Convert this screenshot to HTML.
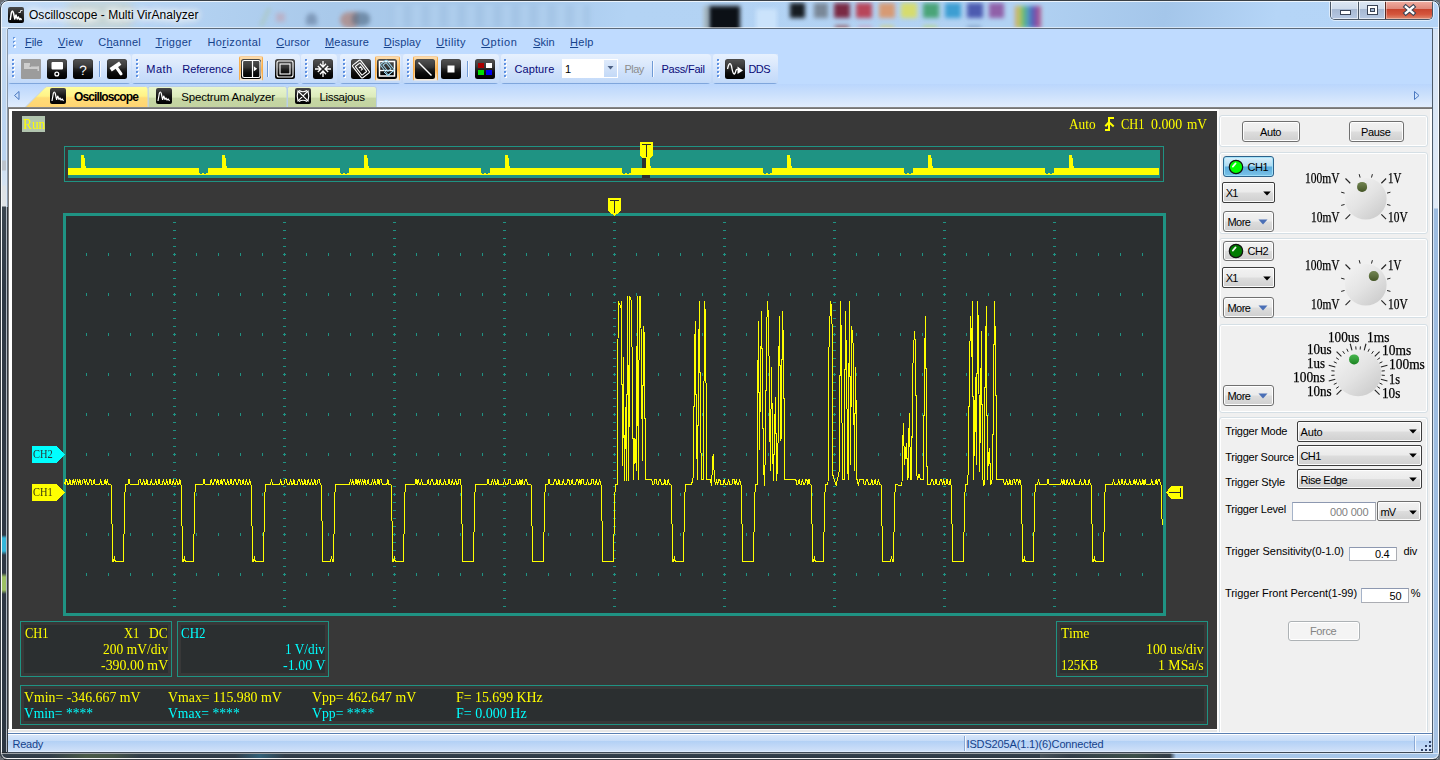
<!DOCTYPE html>
<html lang="en"><head><meta charset="utf-8"><title>Oscilloscope - Multi VirAnalyzer</title>
<style>
*{box-sizing:border-box;margin:0;padding:0}
html,body{width:1440px;height:760px;overflow:hidden;background:#6a6f75}
body{position:relative;font-family:"Liberation Sans","DejaVu Sans",sans-serif;font-size:11px;color:#000}
.abs{position:absolute}
#win{position:absolute;left:0;top:0;width:1440px;height:760px;border-radius:8px 8px 7px 7px;overflow:hidden;
 background:linear-gradient(to bottom,#b6d4f2 0,#b4d3f2 28px,#b9d3ee 29px,#b3cbe6 400px,#a9c0da 700px,#46545e 752px,#27343b 760px)}
#winborder{position:absolute;left:0;top:0;width:1440px;height:760px;border-radius:8px 8px 7px 7px;border:1px solid #3a4046;box-shadow:inset 0 0 0 1px rgba(255,255,255,.75);pointer-events:none;z-index:50}
#title{position:absolute;left:0;top:0;width:1440px;height:29px;overflow:hidden;
 background:linear-gradient(100deg,#c4dcf6 0,#b8d6f5 120px,#a9c9ea 330px,#a6c8ea 520px,#b3d3f4 620px,#b2d2f3 1000px,#a4c6ea 1150px,#b5d5f7 1260px,#b4d4f6 1440px)}
#title .blob{position:absolute;filter:blur(2.2px)}
#ttext{position:absolute;left:29px;top:6.700px;font-size:12px;line-height:16px;color:#000;white-space:nowrap;letter-spacing:0.03px;
 text-shadow:0 0 6px #fff,0 0 8px #fff,0 0 10px #fff,0 0 12px rgba(255,255,255,.9)}
#client{position:absolute;left:8px;top:29px;width:1425px;height:723px;background:#bfdbff;overflow:hidden}
.lframe{position:absolute;top:29px;height:724px;width:8px}

</style></head><body>
<div id="win">
<div id="title">
<div class="blob" style="left:68px;top:1px;width:64px;height:28px;background:#d6d2a8;opacity:.42;filter:blur(5px)"></div>
<div class="blob" style="left:255px;top:8px;width:20px;height:18px;background:linear-gradient(115deg,transparent 40%,#a9c39a 50%,transparent 62%);opacity:.55"></div>
<div class="blob" style="left:276px;top:13px;width:9px;height:9px;background:#c69aa6;opacity:.5"></div>
<div class="blob" style="left:306px;top:13px;width:11px;height:12px;background:#6d86a6;opacity:.7;border-radius:50% 50% 0 0"></div>
<div class="blob" style="left:340px;top:12px;width:18px;height:16px;background:#b07a6c;opacity:.65;border-radius:60% 20% 40% 60%"></div>
<div class="blob" style="left:352px;top:12px;width:18px;height:14px;background:#4d6680;opacity:.6;border-radius:40%"></div>
<div class="blob" style="left:390px;top:5px;width:200px;height:22px;background:repeating-linear-gradient(90deg,#a2c2e3 0,#b4d2f0 9px,#9fc0e2 18px);opacity:.7"></div>
<div class="blob" style="left:709px;top:6px;width:31px;height:26px;background:#0c1016"></div>
<div class="blob" style="left:704px;top:6px;width:4px;height:26px;background:#9a9a8a;opacity:.6"></div>
<div class="blob" style="left:756px;top:9px;width:21px;height:22px;background:#cbe3fb"></div>
<div class="blob" style="left:790px;top:3px;width:15px;height:15px;background:#161c22"></div>
<div class="blob" style="left:814px;top:3px;width:14px;height:15px;background:#7a8898"></div>
<div class="blob" style="left:834px;top:3px;width:16px;height:15px;background:#7a2a44"></div>
<div class="blob" style="left:856px;top:3px;width:16px;height:15px;background:#b8465a"></div>
<div class="blob" style="left:879px;top:3px;width:16px;height:15px;background:#d79a74"></div>
<div class="blob" style="left:901px;top:3px;width:16px;height:15px;background:#d6dc6e"></div>
<div class="blob" style="left:923px;top:3px;width:16px;height:15px;background:#4aa478"></div>
<div class="blob" style="left:945px;top:3px;width:16px;height:15px;background:#3d9ed2"></div>
<div class="blob" style="left:967px;top:3px;width:16px;height:15px;background:#4d5bb0"></div>
<div class="blob" style="left:989px;top:3px;width:15px;height:15px;background:#9060a8"></div>
<div class="blob" style="left:835px;top:25px;width:14px;height:5px;background:#8a3a3a;opacity:.6"></div>
<div class="blob" style="left:858px;top:25px;width:14px;height:5px;background:#c9a0c0;opacity:.6"></div>
<div class="blob" style="left:880px;top:25px;width:14px;height:5px;background:#d8d070;opacity:.6"></div>
<div class="blob" style="left:923px;top:25px;width:14px;height:5px;background:#b8d878;opacity:.6"></div>
<div class="blob" style="left:967px;top:25px;width:14px;height:5px;background:#7a98c0;opacity:.6"></div>
<div class="blob" style="left:1015px;top:6px;width:26px;height:22px;background:linear-gradient(90deg,#c8a070,#c8c860,#60b878,#50a0c8,#5060b8,#9050a8,#b86080)"></div>
<div class="abs" style="left:0;top:27px;width:1440px;height:1px;background:rgba(255,255,255,.55)"></div>
<svg class="abs" style="left:8px;top:7px" width="16" height="16" viewBox="0 0 16 16"><defs><linearGradient id="ig" x1="0" y1="0" x2="0" y2="1"><stop offset="0" stop-color="#4a4a4a"/><stop offset=".5" stop-color="#1c1c1c"/><stop offset="1" stop-color="#000"/></linearGradient></defs><rect x="0" y="0" width="16" height="16" rx="2" fill="url(#ig)"/><path d="M2.200 13 L3.300 6 Q4.400 2 5.500 6 L6.800 12 L8 8 L9.300 12 L10.400 10 L11.500 12.500 L12.500 11.500 L13.500 13" fill="none" stroke="#fff" stroke-width="1.500" stroke-linejoin="round"/><path d="M10.5 5.5 H12.5 V3.5 H14.5" fill="none" stroke="#ddd" stroke-width="1"/></svg>
<div id="ttext">Oscilloscope - Multi VirAnalyzer</div>
<div class="abs" style="left:1330px;top:0;width:103px;height:20px;border:1px solid #4a5766;border-top:none;border-radius:0 0 5px 5px;overflow:hidden;box-shadow:0 0 0 1px rgba(255,255,255,.55)">
<div class="abs" style="left:0;top:0;width:27px;height:19px;background:linear-gradient(to bottom,#dfe9f5 0,#cfdcec 45%,#a7b9d3 50%,#b6c8e2 100%);box-shadow:inset 0 0 0 1px rgba(255,255,255,.6)"></div>
<div class="abs" style="left:27px;top:0;width:1px;height:19px;background:#4a5766"></div>
<div class="abs" style="left:28px;top:0;width:26px;height:19px;background:linear-gradient(to bottom,#dfe9f5 0,#cfdcec 45%,#a7b9d3 50%,#b6c8e2 100%);box-shadow:inset 0 0 0 1px rgba(255,255,255,.6)"></div>
<div class="abs" style="left:54px;top:0;width:1px;height:19px;background:#5a2a22"></div>
<div class="abs" style="left:55px;top:0;width:47px;height:19px;background:linear-gradient(to bottom,#f3b4a8 0,#e08a7c 45%,#c8452f 50%,#d4553c 75%,#e08a70 100%);box-shadow:inset 0 0 0 1px rgba(255,255,255,.35)"></div>
<svg class="abs" style="left:0;top:0" width="103" height="20" viewBox="0 0 103 20">
<rect x="9.500" y="10.500" width="10" height="4" fill="#fff" stroke="#3a4456" stroke-width="1"/>
<rect x="36.500" y="5.500" width="10" height="9" fill="#fff" stroke="#3a4456" stroke-width="1"/><rect x="39.500" y="8.500" width="4" height="3" fill="#a7b9d3" stroke="#3a4456" stroke-width="1"/>
<path d="M74.800 6.800 L82.200 13.200 M82.200 6.800 L74.800 13.200" stroke="#3a4456" stroke-width="4.400" stroke-linecap="square" fill="none"/><path d="M74.800 6.800 L82.200 13.200 M82.200 6.800 L74.800 13.200" stroke="#fff" stroke-width="2.300" stroke-linecap="square" fill="none"/>
</svg></div>
</div>
<div class="abs" style="left:0;top:29px;width:8px;height:724px;background:linear-gradient(to bottom,#c3d9f2 0,#b9d3f0 131px,#bcc3cc 132px,#bcc3cc 141px,#cfe0f2 142px,#d4e2f1 156px,#dde2e6 157px,#dfe3e6 177px,#3b4650 178px,#2f3a46 260px,#2e3844 506px,#35b5d8 509px,#35b5d8 522px,#2e3844 526px,#2e3844 544px,#9cc064 548px,#9cc064 561px,#2e3844 565px,#2c3641 724px)"></div>
<div class="abs" style="left:0;top:29px;width:2px;height:724px;background:linear-gradient(to right,#20262c 0,#20262c 1px,#d3d9df 1px,#d3d9df 2px)"></div>
<div class="abs" style="left:6px;top:29px;width:2px;height:724px;background:linear-gradient(to right,#b0b8c2 0,#b0b8c2 1px,#343a40 1px,#343a40 2px)"></div>
<div class="abs" style="left:6px;top:29px;width:2px;height:178px;background:linear-gradient(to right,#dbe7f5 0,#dbe7f5 1px,#8796a8 1px,#8796a8 2px)"></div>
<div class="abs" style="left:1433px;top:29px;width:7px;height:724px;background:linear-gradient(to bottom,#d6e4f5 0,#e2ebf7 179px,#9dbce0 180px,#9fbee2 600px,#a6c2e3 724px)"></div>
<div class="abs" style="left:1433px;top:29px;width:1px;height:724px;background:#d6e5f6"></div>
<div class="abs" style="left:1438px;top:29px;width:2px;height:724px;background:linear-gradient(to right,#e8f2fd 0,#e8f2fd 1px,#10151b 1px,#10151b 2px)"></div>
<div class="abs" style="left:0;top:752px;width:1440px;height:8px;background:linear-gradient(to bottom,#22272c 0,#22272c 1px,#9a9fa3 1px,#9a9fa3 2px,#34404b 2px,#2e3944 6px,#d0d3d6 6px,#d0d3d6 7px,#000 7px,#000 8px)"></div>
<div class="abs" style="left:50px;top:754px;width:90px;height:4px;background:linear-gradient(to right,rgba(80,100,70,0) 0,rgba(88,108,72,.6) 40%,rgba(88,108,72,.5) 70%,rgba(80,100,70,0) 100%)"></div>
<div class="abs" style="left:235px;top:754px;width:50px;height:4px;background:linear-gradient(to right,rgba(50,110,140,0) 0,rgba(50,120,150,.6) 50%,rgba(50,110,140,0) 100%)"></div>
<div class="abs" style="left:1040px;top:754px;width:134px;height:4px;background:linear-gradient(to right,rgba(90,100,105,.5) 0,rgba(40,50,60,0) 30px,rgba(70,95,75,.55) 95px,rgba(50,60,66,.3) 125px,rgba(50,60,66,0) 134px)"></div>
<div class="abs" style="left:1170px;top:752px;width:270px;height:7px;background:linear-gradient(to right,rgba(169,200,234,0) 0,#a9c8ea 6px,#a6c5e8 270px)"></div>
<div class="abs" style="left:1170px;top:753px;width:270px;height:1px;background:linear-gradient(to right,rgba(214,229,246,0) 0,#d6e5f6 6px)"></div>
<div class="abs" style="left:1170px;top:758px;width:270px;height:1px;background:linear-gradient(to right,rgba(230,240,252,0) 0,#e6f0fc 6px)"></div>
<div class="abs" style="left:8px;top:28px;width:1425px;height:1px;background:#5b6a7b"></div>
<div class="abs" id="bars" style="left:0;top:0;width:1440px;height:112px">
<div class="abs" style="left:8px;top:29px;width:1425px;height:25px;background:#bfdbff"></div>
<div class="abs" style="left:8px;top:54px;width:1425px;height:30px;background:#bfdbff"></div><div class="abs" style="left:8px;top:54px;width:770px;height:30px;background:linear-gradient(to bottom,#d3e4fc 0,#c9defa 60%,#bdd5f6 95%,#bfdbff 100%)"></div>
<div class="abs" style="left:8px;top:84px;width:1425px;height:24px;background:linear-gradient(to bottom,#bad6fd 0,#c9dffc 40%,#e3eefd 100%)"></div>
<svg class="abs" style="left:8px;top:29px" width="12" height="25" viewBox="0 0 12 25" shape-rendering="crispEdges">
<rect x="5" y="8" width="2" height="2" fill="#6a9ae0"/><rect x="6" y="9" width="2" height="2" fill="#fff" opacity=".9"/><rect x="5" y="8" width="2" height="2" fill="#6a9ae0" opacity=".0"/>
<rect x="5" y="12" width="2" height="2" fill="#6a9ae0"/><rect x="6" y="13" width="2" height="2" fill="#fff" opacity=".9"/><rect x="5" y="12" width="2" height="2" fill="#6a9ae0" opacity=".0"/>
<rect x="5" y="16" width="2" height="2" fill="#6a9ae0"/><rect x="6" y="17" width="2" height="2" fill="#fff" opacity=".9"/><rect x="5" y="16" width="2" height="2" fill="#6a9ae0" opacity=".0"/>
</svg>
<span class="abs" style="left:25.00px;top:35.00px;font-family:'Liberation Sans','DejaVu Sans',sans-serif;font-size:11px;line-height:14px;color:#15428b;letter-spacing:-0.062px;white-space:pre;"><u>F</u>ile</span>
<span class="abs" style="left:58.00px;top:35.00px;font-family:'Liberation Sans','DejaVu Sans',sans-serif;font-size:11px;line-height:14px;color:#15428b;letter-spacing:0.336px;white-space:pre;"><u>V</u>iew</span>
<span class="abs" style="left:98.25px;top:35.00px;font-family:'Liberation Sans','DejaVu Sans',sans-serif;font-size:11px;line-height:14px;color:#15428b;letter-spacing:0.250px;white-space:pre;">C<u>h</u>annel</span>
<span class="abs" style="left:155.50px;top:35.00px;font-family:'Liberation Sans','DejaVu Sans',sans-serif;font-size:11px;line-height:14px;color:#15428b;letter-spacing:0.295px;white-space:pre;"><u>T</u>rigger</span>
<span class="abs" style="left:207.50px;top:35.00px;font-family:'Liberation Sans','DejaVu Sans',sans-serif;font-size:11px;line-height:14px;color:#15428b;letter-spacing:0.397px;white-space:pre;">Ho<u>r</u>izontal</span>
<span class="abs" style="left:276.25px;top:35.00px;font-family:'Liberation Sans','DejaVu Sans',sans-serif;font-size:11px;line-height:14px;color:#15428b;letter-spacing:0.122px;white-space:pre;"><u>C</u>ursor</span>
<span class="abs" style="left:325.00px;top:35.00px;font-family:'Liberation Sans','DejaVu Sans',sans-serif;font-size:11px;line-height:14px;color:#15428b;letter-spacing:0.170px;white-space:pre;"><u>M</u>easure</span>
<span class="abs" style="left:383.75px;top:35.00px;font-family:'Liberation Sans','DejaVu Sans',sans-serif;font-size:11px;line-height:14px;color:#15428b;letter-spacing:0.167px;white-space:pre;"><u>D</u>isplay</span>
<span class="abs" style="left:436.25px;top:35.00px;font-family:'Liberation Sans','DejaVu Sans',sans-serif;font-size:11px;line-height:14px;color:#15428b;letter-spacing:0.406px;white-space:pre;"><u>U</u>tility</span>
<span class="abs" style="left:481.25px;top:35.00px;font-family:'Liberation Sans','DejaVu Sans',sans-serif;font-size:11px;line-height:14px;color:#15428b;letter-spacing:0.638px;white-space:pre;"><u>O</u>ption</span>
<span class="abs" style="left:533.25px;top:35.00px;font-family:'Liberation Sans','DejaVu Sans',sans-serif;font-size:11px;line-height:14px;color:#15428b;letter-spacing:-0.039px;white-space:pre;"><u>S</u>kin</span>
<span class="abs" style="left:570.00px;top:35.00px;font-family:'Liberation Sans','DejaVu Sans',sans-serif;font-size:11px;line-height:14px;color:#15428b;letter-spacing:0.277px;white-space:pre;"><u>H</u>elp</span>
<div class="abs" style="left:8px;top:54px;width:123px;height:30px;border-radius:3px 4px 4px 3px;background:linear-gradient(to bottom,#e7f1fe 0,#dce9fc 10px,#cfe1fb 18px,#c3daf9 28px,#c0d8f8 29px,#7fa6dc 29px,#7fa6dc 30px)"></div>
<div class="abs" style="left:132px;top:54px;width:167.5px;height:30px;border-radius:3px 4px 4px 3px;background:linear-gradient(to bottom,#e7f1fe 0,#dce9fc 10px,#cfe1fb 18px,#c3daf9 28px,#c0d8f8 29px,#7fa6dc 29px,#7fa6dc 30px)"></div>
<div class="abs" style="left:301px;top:54px;width:36px;height:30px;border-radius:3px 4px 4px 3px;background:linear-gradient(to bottom,#e7f1fe 0,#dce9fc 10px,#cfe1fb 18px,#c3daf9 28px,#c0d8f8 29px,#7fa6dc 29px,#7fa6dc 30px)"></div>
<div class="abs" style="left:339.5px;top:54px;width:61px;height:30px;border-radius:3px 4px 4px 3px;background:linear-gradient(to bottom,#e7f1fe 0,#dce9fc 10px,#cfe1fb 18px,#c3daf9 28px,#c0d8f8 29px,#7fa6dc 29px,#7fa6dc 30px)"></div>
<div class="abs" style="left:403px;top:54px;width:95.5px;height:30px;border-radius:3px 4px 4px 3px;background:linear-gradient(to bottom,#e7f1fe 0,#dce9fc 10px,#cfe1fb 18px,#c3daf9 28px,#c0d8f8 29px,#7fa6dc 29px,#7fa6dc 30px)"></div>
<div class="abs" style="left:501px;top:54px;width:210px;height:30px;border-radius:3px 4px 4px 3px;background:linear-gradient(to bottom,#e7f1fe 0,#dce9fc 10px,#cfe1fb 18px,#c3daf9 28px,#c0d8f8 29px,#7fa6dc 29px,#7fa6dc 30px)"></div>
<div class="abs" style="left:712.5px;top:54px;width:65px;height:30px;border-radius:3px 4px 4px 3px;background:linear-gradient(to bottom,#e7f1fe 0,#dce9fc 10px,#cfe1fb 18px,#c3daf9 28px,#c0d8f8 29px,#7fa6dc 29px,#7fa6dc 30px)"></div>
<svg class="abs" style="left:12px;top:58px" width="4" height="22" viewBox="0 0 4 22" shape-rendering="crispEdges">
<rect x="0" y="1" width="2" height="2" fill="#5a8ee0"/><rect x="1" y="2" width="2" height="2" fill="#fff"/><rect x="0" y="1" width="2" height="2" fill="#5a8ee0" opacity=".85"/>
<rect x="0" y="5" width="2" height="2" fill="#5a8ee0"/><rect x="1" y="6" width="2" height="2" fill="#fff"/><rect x="0" y="5" width="2" height="2" fill="#5a8ee0" opacity=".85"/>
<rect x="0" y="9" width="2" height="2" fill="#5a8ee0"/><rect x="1" y="10" width="2" height="2" fill="#fff"/><rect x="0" y="9" width="2" height="2" fill="#5a8ee0" opacity=".85"/>
<rect x="0" y="13" width="2" height="2" fill="#5a8ee0"/><rect x="1" y="14" width="2" height="2" fill="#fff"/><rect x="0" y="13" width="2" height="2" fill="#5a8ee0" opacity=".85"/>
<rect x="0" y="17" width="2" height="2" fill="#5a8ee0"/><rect x="1" y="18" width="2" height="2" fill="#fff"/><rect x="0" y="17" width="2" height="2" fill="#5a8ee0" opacity=".85"/>
</svg>
<svg class="abs" style="left:135.5px;top:58px" width="4" height="22" viewBox="0 0 4 22" shape-rendering="crispEdges">
<rect x="0" y="1" width="2" height="2" fill="#5a8ee0"/><rect x="1" y="2" width="2" height="2" fill="#fff"/><rect x="0" y="1" width="2" height="2" fill="#5a8ee0" opacity=".85"/>
<rect x="0" y="5" width="2" height="2" fill="#5a8ee0"/><rect x="1" y="6" width="2" height="2" fill="#fff"/><rect x="0" y="5" width="2" height="2" fill="#5a8ee0" opacity=".85"/>
<rect x="0" y="9" width="2" height="2" fill="#5a8ee0"/><rect x="1" y="10" width="2" height="2" fill="#fff"/><rect x="0" y="9" width="2" height="2" fill="#5a8ee0" opacity=".85"/>
<rect x="0" y="13" width="2" height="2" fill="#5a8ee0"/><rect x="1" y="14" width="2" height="2" fill="#fff"/><rect x="0" y="13" width="2" height="2" fill="#5a8ee0" opacity=".85"/>
<rect x="0" y="17" width="2" height="2" fill="#5a8ee0"/><rect x="1" y="18" width="2" height="2" fill="#fff"/><rect x="0" y="17" width="2" height="2" fill="#5a8ee0" opacity=".85"/>
</svg>
<svg class="abs" style="left:304.5px;top:58px" width="4" height="22" viewBox="0 0 4 22" shape-rendering="crispEdges">
<rect x="0" y="1" width="2" height="2" fill="#5a8ee0"/><rect x="1" y="2" width="2" height="2" fill="#fff"/><rect x="0" y="1" width="2" height="2" fill="#5a8ee0" opacity=".85"/>
<rect x="0" y="5" width="2" height="2" fill="#5a8ee0"/><rect x="1" y="6" width="2" height="2" fill="#fff"/><rect x="0" y="5" width="2" height="2" fill="#5a8ee0" opacity=".85"/>
<rect x="0" y="9" width="2" height="2" fill="#5a8ee0"/><rect x="1" y="10" width="2" height="2" fill="#fff"/><rect x="0" y="9" width="2" height="2" fill="#5a8ee0" opacity=".85"/>
<rect x="0" y="13" width="2" height="2" fill="#5a8ee0"/><rect x="1" y="14" width="2" height="2" fill="#fff"/><rect x="0" y="13" width="2" height="2" fill="#5a8ee0" opacity=".85"/>
<rect x="0" y="17" width="2" height="2" fill="#5a8ee0"/><rect x="1" y="18" width="2" height="2" fill="#fff"/><rect x="0" y="17" width="2" height="2" fill="#5a8ee0" opacity=".85"/>
</svg>
<svg class="abs" style="left:342.5px;top:58px" width="4" height="22" viewBox="0 0 4 22" shape-rendering="crispEdges">
<rect x="0" y="1" width="2" height="2" fill="#5a8ee0"/><rect x="1" y="2" width="2" height="2" fill="#fff"/><rect x="0" y="1" width="2" height="2" fill="#5a8ee0" opacity=".85"/>
<rect x="0" y="5" width="2" height="2" fill="#5a8ee0"/><rect x="1" y="6" width="2" height="2" fill="#fff"/><rect x="0" y="5" width="2" height="2" fill="#5a8ee0" opacity=".85"/>
<rect x="0" y="9" width="2" height="2" fill="#5a8ee0"/><rect x="1" y="10" width="2" height="2" fill="#fff"/><rect x="0" y="9" width="2" height="2" fill="#5a8ee0" opacity=".85"/>
<rect x="0" y="13" width="2" height="2" fill="#5a8ee0"/><rect x="1" y="14" width="2" height="2" fill="#fff"/><rect x="0" y="13" width="2" height="2" fill="#5a8ee0" opacity=".85"/>
<rect x="0" y="17" width="2" height="2" fill="#5a8ee0"/><rect x="1" y="18" width="2" height="2" fill="#fff"/><rect x="0" y="17" width="2" height="2" fill="#5a8ee0" opacity=".85"/>
</svg>
<svg class="abs" style="left:406.5px;top:58px" width="4" height="22" viewBox="0 0 4 22" shape-rendering="crispEdges">
<rect x="0" y="1" width="2" height="2" fill="#5a8ee0"/><rect x="1" y="2" width="2" height="2" fill="#fff"/><rect x="0" y="1" width="2" height="2" fill="#5a8ee0" opacity=".85"/>
<rect x="0" y="5" width="2" height="2" fill="#5a8ee0"/><rect x="1" y="6" width="2" height="2" fill="#fff"/><rect x="0" y="5" width="2" height="2" fill="#5a8ee0" opacity=".85"/>
<rect x="0" y="9" width="2" height="2" fill="#5a8ee0"/><rect x="1" y="10" width="2" height="2" fill="#fff"/><rect x="0" y="9" width="2" height="2" fill="#5a8ee0" opacity=".85"/>
<rect x="0" y="13" width="2" height="2" fill="#5a8ee0"/><rect x="1" y="14" width="2" height="2" fill="#fff"/><rect x="0" y="13" width="2" height="2" fill="#5a8ee0" opacity=".85"/>
<rect x="0" y="17" width="2" height="2" fill="#5a8ee0"/><rect x="1" y="18" width="2" height="2" fill="#fff"/><rect x="0" y="17" width="2" height="2" fill="#5a8ee0" opacity=".85"/>
</svg>
<svg class="abs" style="left:504px;top:58px" width="4" height="22" viewBox="0 0 4 22" shape-rendering="crispEdges">
<rect x="0" y="1" width="2" height="2" fill="#5a8ee0"/><rect x="1" y="2" width="2" height="2" fill="#fff"/><rect x="0" y="1" width="2" height="2" fill="#5a8ee0" opacity=".85"/>
<rect x="0" y="5" width="2" height="2" fill="#5a8ee0"/><rect x="1" y="6" width="2" height="2" fill="#fff"/><rect x="0" y="5" width="2" height="2" fill="#5a8ee0" opacity=".85"/>
<rect x="0" y="9" width="2" height="2" fill="#5a8ee0"/><rect x="1" y="10" width="2" height="2" fill="#fff"/><rect x="0" y="9" width="2" height="2" fill="#5a8ee0" opacity=".85"/>
<rect x="0" y="13" width="2" height="2" fill="#5a8ee0"/><rect x="1" y="14" width="2" height="2" fill="#fff"/><rect x="0" y="13" width="2" height="2" fill="#5a8ee0" opacity=".85"/>
<rect x="0" y="17" width="2" height="2" fill="#5a8ee0"/><rect x="1" y="18" width="2" height="2" fill="#fff"/><rect x="0" y="17" width="2" height="2" fill="#5a8ee0" opacity=".85"/>
</svg>
<svg class="abs" style="left:716.5px;top:58px" width="4" height="22" viewBox="0 0 4 22" shape-rendering="crispEdges">
<rect x="0" y="1" width="2" height="2" fill="#5a8ee0"/><rect x="1" y="2" width="2" height="2" fill="#fff"/><rect x="0" y="1" width="2" height="2" fill="#5a8ee0" opacity=".85"/>
<rect x="0" y="5" width="2" height="2" fill="#5a8ee0"/><rect x="1" y="6" width="2" height="2" fill="#fff"/><rect x="0" y="5" width="2" height="2" fill="#5a8ee0" opacity=".85"/>
<rect x="0" y="9" width="2" height="2" fill="#5a8ee0"/><rect x="1" y="10" width="2" height="2" fill="#fff"/><rect x="0" y="9" width="2" height="2" fill="#5a8ee0" opacity=".85"/>
<rect x="0" y="13" width="2" height="2" fill="#5a8ee0"/><rect x="1" y="14" width="2" height="2" fill="#fff"/><rect x="0" y="13" width="2" height="2" fill="#5a8ee0" opacity=".85"/>
<rect x="0" y="17" width="2" height="2" fill="#5a8ee0"/><rect x="1" y="18" width="2" height="2" fill="#fff"/><rect x="0" y="17" width="2" height="2" fill="#5a8ee0" opacity=".85"/>
</svg>
<div class="abs" style="left:99px;top:61px;width:1px;height:16px;background:#6f9ad6"></div><div class="abs" style="left:100px;top:61px;width:1px;height:16px;background:#f4f8fe"></div>
<div class="abs" style="left:267px;top:61px;width:1px;height:16px;background:#6f9ad6"></div><div class="abs" style="left:268px;top:61px;width:1px;height:16px;background:#f4f8fe"></div>
<div class="abs" style="left:467px;top:61px;width:1px;height:16px;background:#6f9ad6"></div><div class="abs" style="left:468px;top:61px;width:1px;height:16px;background:#f4f8fe"></div>
<div class="abs" style="left:652px;top:61px;width:1px;height:16px;background:#6f9ad6"></div><div class="abs" style="left:653px;top:61px;width:1px;height:16px;background:#f4f8fe"></div>
<div class="abs" style="left:239px;top:56px;width:24px;height:25px;border:1px solid;border-color:#f6cf9f #f7ae4c #dfe3ea #f7ae4c;border-radius:2px;background:linear-gradient(to bottom,#fbdcae 0,#fdc06a 38%,#fdb555 55%,#fdd193 76%,#efe8e0 100%)"></div>
<div class="abs" style="left:375px;top:56px;width:24.5px;height:25px;border:1px solid;border-color:#f6cf9f #f7ae4c #dfe3ea #f7ae4c;border-radius:2px;background:linear-gradient(to bottom,#fbdcae 0,#fdc06a 38%,#fdb555 55%,#fdd193 76%,#efe8e0 100%)"></div>
<div class="abs" style="left:413px;top:56px;width:24.5px;height:25px;border:1px solid;border-color:#f6cf9f #f7ae4c #dfe3ea #f7ae4c;border-radius:2px;background:linear-gradient(to bottom,#fbdcae 0,#fdc06a 38%,#fdb555 55%,#fdd193 76%,#efe8e0 100%)"></div>
<span class="abs" style="left:146.25px;top:62.00px;font-family:'Liberation Sans','DejaVu Sans',sans-serif;font-size:11px;line-height:14px;color:#0a0a78;letter-spacing:0.508px;white-space:pre;">Math</span>
<span class="abs" style="left:182.25px;top:62.00px;font-family:'Liberation Sans','DejaVu Sans',sans-serif;font-size:11px;line-height:14px;color:#0a0a78;letter-spacing:-0.030px;white-space:pre;">Reference</span>
<span class="abs" style="left:514.40px;top:62.00px;font-family:'Liberation Sans','DejaVu Sans',sans-serif;font-size:11px;line-height:14px;color:#0a0a78;letter-spacing:0.123px;white-space:pre;">Capture</span>
<span class="abs" style="left:624.40px;top:62.00px;font-family:'Liberation Sans','DejaVu Sans',sans-serif;font-size:11px;line-height:14px;color:#8d8d8d;letter-spacing:-0.477px;white-space:pre;">Play</span>
<span class="abs" style="left:661.50px;top:62.00px;font-family:'Liberation Sans','DejaVu Sans',sans-serif;font-size:11px;line-height:14px;color:#0a0a78;letter-spacing:-0.217px;white-space:pre;">Pass/Fail</span>
<span class="abs" style="left:748.50px;top:62.00px;font-family:'Liberation Sans','DejaVu Sans',sans-serif;font-size:11px;line-height:14px;color:#0a0a78;letter-spacing:-0.578px;white-space:pre;">DDS</span>
<div class="abs" style="left:562px;top:59px;width:56px;height:19px;background:#fff;border:1px solid #fff"></div>
<div class="abs" style="left:603px;top:59px;width:15px;height:19px;background:linear-gradient(to bottom,#deeafb,#c3d9f7);border:1px solid #fff"></div>
<svg class="abs" style="left:607px;top:66px" width="7" height="4" viewBox="0 0 7 4"><path d="M0.500 0 H6.500 L3.500 3.500 Z" fill="#4d6185"/></svg>
<span class="abs" style="left:565.00px;top:62.00px;font-family:'Liberation Sans','DejaVu Sans',sans-serif;font-size:11px;line-height:14px;color:#000;white-space:pre;">1</span>
<svg class="abs" style="left:0;top:54px" width="800" height="30" viewBox="0 54 800 30">
<defs><linearGradient id="ibg" x1="0" y1="0" x2="0" y2="1"><stop offset="0" stop-color="#4c4c4c"/><stop offset=".4" stop-color="#2c2c2c"/><stop offset=".7" stop-color="#0c0c0c"/><stop offset="1" stop-color="#000"/></linearGradient></defs>
<rect x="21" y="59" width="20" height="20" rx="1" fill="#9c9c9c"/><rect x="24" y="63" width="6" height="6" fill="#cdcdcd"/><rect x="30" y="66.500" width="9" height="2.500" fill="#cdcdcd"/><rect x="37.500" y="66.500" width="1.500" height="4.500" fill="#cdcdcd"/><rect x="29.500" y="65.500" width="1.500" height="1.500" fill="#9c9c9c"/>
<rect x="47" y="59" width="20" height="20" rx="2.5" fill="url(#ibg)"/><rect x="48" y="60" width="18" height="8.4" rx="2" fill="#fff" opacity=".05"/><rect x="51.500" y="62" width="11.500" height="7.500" rx="1" fill="#fff"/><circle cx="56.800" cy="74" r="1.900" fill="none" stroke="#fff" stroke-width="1.300"/>
<rect x="73" y="59" width="20" height="20" rx="2.5" fill="url(#ibg)"/><rect x="74" y="60" width="18" height="8.4" rx="2" fill="#fff" opacity=".05"/><text x="83" y="74.500" font-family="Liberation Sans, sans-serif" font-size="13.500" fill="#fff" text-anchor="middle" style="text-rendering:geometricPrecision">?</text>
<rect x="107" y="59" width="20" height="20" rx="2.5" fill="url(#ibg)"/><rect x="108" y="60" width="18" height="8.4" rx="2" fill="#fff" opacity=".05"/><path d="M112.300 68.600 L118.600 64.200" stroke="#fff" stroke-width="4" stroke-linecap="square" fill="none"/><path d="M116.300 67.200 L121 73.800" stroke="#fff" stroke-width="3.100" stroke-linecap="round" fill="none"/>
<rect x="241" y="59" width="20" height="20" rx="2.5" fill="url(#ibg)"/><rect x="242" y="60" width="18" height="8.4" rx="2" fill="#fff" opacity=".05"/><rect x="242.500" y="60.500" width="17.500" height="17" rx="1.800" fill="none" stroke="#fff" stroke-width="1.200"/><path d="M252.500 60.500 V77.500" stroke="#fff" stroke-width="1.200"/><path d="M253.800 66.300 L257.200 68.800 L253.800 71.300 Z" fill="#fff"/>
<rect x="275" y="59" width="20" height="20" rx="2.5" fill="url(#ibg)"/><rect x="276" y="60" width="18" height="8.4" rx="2" fill="#fff" opacity=".05"/><rect x="277" y="61" width="16" height="16" rx="2" fill="none" stroke="#fff" stroke-width="1.100"/><rect x="280" y="64" width="10" height="10" fill="none" stroke="#fff" stroke-width="1.100"/>
<rect x="313" y="59" width="20" height="20" rx="2.5" fill="url(#ibg)"/><rect x="314" y="60" width="18" height="8.4" rx="2" fill="#fff" opacity=".05"/><g stroke="#fff" stroke-width="1.300" fill="none"><path d="M315 69 H320.500 M317.800 66 L321 69 L317.800 72"/><path d="M331 69 H325.500 M328.200 66 L325 69 L328.200 72"/><path d="M323 61 V66.500 M320 63.800 L323 67 L326 63.800"/><path d="M323 77 V71.500 M320 74.200 L323 71 L326 74.200"/></g>
<rect x="351" y="59" width="20" height="20" rx="2.5" fill="url(#ibg)"/><rect x="352" y="60" width="18" height="8.4" rx="2" fill="#fff" opacity=".05"/><g transform="rotate(-38 361 69)" fill="none" stroke="#fff" stroke-width="1.100"><rect x="356" y="61" width="10" height="16" rx="1"/><rect x="358" y="63.500" width="6" height="11" rx=".5"/><path d="M360 67 h2 v3 h-2"/></g>
<rect x="377" y="59" width="20" height="20" rx="2.5" fill="url(#ibg)"/><rect x="378" y="60" width="18" height="8.4" rx="2" fill="#fff" opacity=".05"/><rect x="379.500" y="61.500" width="15" height="14.500" fill="none" stroke="#fff" stroke-width="1.500"/><path d="M379.500 70.500 H394.500" stroke="#fff" stroke-width="1.400"/><g transform="rotate(-38 387 67)" fill="none" stroke="#9fd8f0" stroke-width="1"><rect x="383" y="61" width="8" height="13" rx="1"/><rect x="385" y="63" width="4" height="8"/></g><path d="M384 72 L388 76 L393 71" fill="none" stroke="#9fd8f0" stroke-width="1"/>
<rect x="415" y="59" width="20" height="20" rx="2.5" fill="url(#ibg)"/><rect x="416" y="60" width="18" height="8.4" rx="2" fill="#fff" opacity=".05"/><path d="M418.500 62.500 L431.500 75.500" stroke="#fff" stroke-width="1.400"/>
<rect x="441" y="59" width="20" height="20" rx="2.5" fill="url(#ibg)"/><rect x="442" y="60" width="18" height="8.4" rx="2" fill="#fff" opacity=".05"/><rect x="447.500" y="65.500" width="7" height="7" fill="#fff"/>
<rect x="475" y="59" width="20" height="20" rx="2.5" fill="url(#ibg)"/><rect x="476" y="60" width="18" height="8.4" rx="2" fill="#fff" opacity=".05"/><rect x="478" y="63" width="6" height="5" fill="#a80000"/><rect x="486" y="63" width="6" height="5" fill="#fff"/><rect x="478" y="70" width="6" height="5" fill="#00e000"/><rect x="486" y="70" width="6" height="5" fill="#0000f0"/>
<rect x="725" y="59" width="20" height="20" rx="2.5" fill="url(#ibg)"/><rect x="726" y="60" width="18" height="8.4" rx="2" fill="#fff" opacity=".05"/><path d="M727.500 69 Q729.500 60 731.500 66 Q733.500 78 735.500 72 Q736.500 68 737.500 70" fill="none" stroke="#fff" stroke-width="1.300"/><path d="M737.500 66.500 L743 70.500 L737.500 74 Z" fill="#fff"/>
</svg>
<svg class="abs" style="left:8px;top:84px" width="1425" height="24" viewBox="8 84 1425 24">
<defs><linearGradient id="tabA" x1="0" y1="0" x2="0" y2="1"><stop offset="0" stop-color="#ffff9e"/><stop offset=".46" stop-color="#fff287"/><stop offset=".54" stop-color="#ffdc76"/><stop offset="1" stop-color="#ffd472"/></linearGradient>
<linearGradient id="tabB" x1="0" y1="0" x2="0" y2="1"><stop offset="0" stop-color="#e9f6cf"/><stop offset=".5" stop-color="#dcebbc"/><stop offset=".56" stop-color="#c6d6a4"/><stop offset="1" stop-color="#c3d3a0"/></linearGradient>
<linearGradient id="ibg2" x1="0" y1="0" x2="0" y2="1"><stop offset="0" stop-color="#484848"/><stop offset=".5" stop-color="#151515"/><stop offset="1" stop-color="#000"/></linearGradient></defs>
<path d="M148 107.500 V88.500 Q148 86.500 150 86.500 H284.500 Q287 86.500 287 89 V107.500 Z" fill="url(#tabB)" stroke="#b9cfe8" stroke-width="1"/>
<path d="M287.500 107.500 V88.500 Q287.500 86.500 289.500 86.500 H374 Q376.500 86.500 376.500 89 V107.500 Z" fill="url(#tabB)" stroke="#b9cfe8" stroke-width="1"/>
<path d="M25 107.500 L45 87.500 Q46 86.500 48 86.500 H145.500 Q148 86.500 148 89 V107.500 Z" fill="url(#tabA)" stroke="#c2d4ea" stroke-width="1"/>
<path d="M19 91.500 L14.500 95.500 L19 99.500 Z" fill="none" stroke="#4a78c0" stroke-width="1"/>
<path d="M1414.500 91.500 L1419 95.500 L1414.500 99.500 Z" fill="none" stroke="#4a78c0" stroke-width="1"/>
<rect x="50" y="88" width="16" height="16" rx="2" fill="url(#ibg2)"/>
<path d="M52 101 l1.3 -7.5 q1 -3 2 0 l1.300 6 l1.200 -3.500 l1.200 3.500 l1 -1.500 l1 2 l1.200 -1 l1.300 2" fill="none" stroke="#fff" stroke-width="1.200" stroke-linejoin="round"/>
<rect x="156" y="88" width="16" height="16" rx="2" fill="url(#ibg2)"/>
<path d="M158 101 l1.3 -7.5 q1 -3 2 0 l1.300 6 l1.200 -3.500 l1.200 3.500 l1 -1.500 l1 2 l1.200 -1 l1.300 2" fill="none" stroke="#fff" stroke-width="1.200" stroke-linejoin="round"/>
<rect x="295" y="88" width="16" height="16" rx="2" fill="url(#ibg2)"/>
<path d="M298 91 Q303 96 308 101 Q309.500 96 308 91 Q303 96 298 101 Q296.500 96 298 91 Z M299 90.500 Q303 93 307 90.500 M299 101.500 Q303 99 307 101.500" fill="none" stroke="#fff" stroke-width="1.100"/>
</svg>
<span class="abs" style="left:74.00px;top:89.50px;font-family:'Liberation Sans','DejaVu Sans',sans-serif;font-size:12px;line-height:15px;color:#000;font-weight:bold;letter-spacing:-0.892px;white-space:pre;">Oscilloscope</span>
<span class="abs" style="left:181.25px;top:89.60px;font-family:'Liberation Sans','DejaVu Sans',sans-serif;font-size:11.5px;line-height:14px;color:#000;letter-spacing:-0.163px;white-space:pre;">Spectrum Analyzer</span>
<span class="abs" style="left:319.40px;top:89.60px;font-family:'Liberation Sans','DejaVu Sans',sans-serif;font-size:11.5px;line-height:14px;color:#000;letter-spacing:-0.306px;white-space:pre;">Lissajous</span>
</div>
<div class="abs" style="left:8px;top:107px;width:1425px;height:2px;background:linear-gradient(to bottom,#8c8c8c,#6e6e6e)"></div>
<div class="abs" style="left:8px;top:109px;width:1209px;height:624px;background:#fff"></div>
<div class="abs" style="left:8px;top:109px;width:1px;height:624px;background:#7d7d7d"></div>
<svg class="abs" style="left:12px;top:111px" width="1205" height="618" viewBox="12 111 1205 618">
<rect x="12" y="111" width="1205" height="618" fill="#383838"/>
<g shape-rendering="crispEdges">
<rect x="22" y="116" width="23" height="16" fill="#b1c4ae"/>
<rect x="64.5" y="146.5" width="1099" height="35" fill="none" stroke="#1f9383" stroke-width="1"/>
<rect x="68" y="150" width="1092" height="28" fill="#1f9383"/>
<rect x="68" y="168" width="1091" height="7" fill="#ffff00"/>
<rect x="81" y="155" width="3" height="13" fill="#ffff00"/><rect x="84" y="158" width="1" height="10" fill="#ffff00"/><rect x="85" y="166" width="1" height="2" fill="#ffff00"/>
<rect x="222" y="155" width="3" height="13" fill="#ffff00"/><rect x="225" y="158" width="1" height="10" fill="#ffff00"/><rect x="226" y="166" width="1" height="2" fill="#ffff00"/>
<rect x="364" y="155" width="3" height="13" fill="#ffff00"/><rect x="367" y="158" width="1" height="10" fill="#ffff00"/><rect x="368" y="166" width="1" height="2" fill="#ffff00"/>
<rect x="505" y="155" width="3" height="13" fill="#ffff00"/><rect x="508" y="158" width="1" height="10" fill="#ffff00"/><rect x="509" y="166" width="1" height="2" fill="#ffff00"/>
<rect x="646" y="155" width="3" height="13" fill="#ffff00"/><rect x="649" y="158" width="1" height="10" fill="#ffff00"/><rect x="650" y="166" width="1" height="2" fill="#ffff00"/>
<rect x="787" y="155" width="3" height="13" fill="#ffff00"/><rect x="790" y="158" width="1" height="10" fill="#ffff00"/><rect x="791" y="166" width="1" height="2" fill="#ffff00"/>
<rect x="928" y="155" width="3" height="13" fill="#ffff00"/><rect x="931" y="158" width="1" height="10" fill="#ffff00"/><rect x="932" y="166" width="1" height="2" fill="#ffff00"/>
<rect x="1069" y="155" width="3" height="13" fill="#ffff00"/><rect x="1072" y="158" width="1" height="10" fill="#ffff00"/><rect x="1073" y="166" width="1" height="2" fill="#ffff00"/>
<rect x="199" y="168" width="9" height="5" fill="#1f9383"/><rect x="200" y="173" width="2" height="1" fill="#1f9383"/><rect x="204" y="173" width="2" height="1" fill="#1f9383"/>
<rect x="340" y="168" width="9" height="5" fill="#1f9383"/><rect x="341" y="173" width="2" height="1" fill="#1f9383"/><rect x="345" y="173" width="2" height="1" fill="#1f9383"/>
<rect x="481" y="168" width="9" height="5" fill="#1f9383"/><rect x="482" y="173" width="2" height="1" fill="#1f9383"/><rect x="486" y="173" width="2" height="1" fill="#1f9383"/>
<rect x="622" y="168" width="9" height="5" fill="#1f9383"/><rect x="623" y="173" width="2" height="1" fill="#1f9383"/><rect x="627" y="173" width="2" height="1" fill="#1f9383"/>
<rect x="763" y="168" width="9" height="5" fill="#1f9383"/><rect x="764" y="173" width="2" height="1" fill="#1f9383"/><rect x="768" y="173" width="2" height="1" fill="#1f9383"/>
<rect x="904" y="168" width="9" height="5" fill="#1f9383"/><rect x="905" y="173" width="2" height="1" fill="#1f9383"/><rect x="909" y="173" width="2" height="1" fill="#1f9383"/>
<rect x="1045" y="168" width="9" height="5" fill="#1f9383"/><rect x="1046" y="173" width="2" height="1" fill="#1f9383"/><rect x="1050" y="173" width="2" height="1" fill="#1f9383"/>
<rect x="642" y="157" width="4" height="11" fill="#2b2f30"/>
<rect x="642" y="175" width="8" height="3" fill="#2b2f30"/>
<rect x="647" y="157" width="3" height="11" fill="#ffff00"/>
<rect x="63" y="213" width="1103" height="403" fill="#1f9383"/>
<rect x="66" y="216" width="1097" height="397" fill="#2b2f30"/>
<path d="M173 222h3M173 230h3M173 238h3M173 246h3M173 254h3M173 262h3M173 270h3M173 278h3M173 286h3M173 294h3M173 302h3M173 310h3M173 318h3M173 326h3M173 334h3M173 342h3M173 350h3M173 358h3M173 366h3M173 374h3M173 382h3M173 390h3M173 398h3M173 406h3M173 414h3M173 422h3M173 430h3M173 438h3M173 446h3M173 454h3M173 462h3M173 470h3M173 478h3M173 486h3M173 494h3M173 502h3M173 510h3M173 518h3M173 526h3M173 534h3M173 542h3M173 550h3M173 558h3M173 566h3M173 574h3M173 582h3M173 590h3M173 598h3M173 606h3M283 222h3M283 230h3M283 238h3M283 246h3M283 254h3M283 262h3M283 270h3M283 278h3M283 286h3M283 294h3M283 302h3M283 310h3M283 318h3M283 326h3M283 334h3M283 342h3M283 350h3M283 358h3M283 366h3M283 374h3M283 382h3M283 390h3M283 398h3M283 406h3M283 414h3M283 422h3M283 430h3M283 438h3M283 446h3M283 454h3M283 462h3M283 470h3M283 478h3M283 486h3M283 494h3M283 502h3M283 510h3M283 518h3M283 526h3M283 534h3M283 542h3M283 550h3M283 558h3M283 566h3M283 574h3M283 582h3M283 590h3M283 598h3M283 606h3M393 222h3M393 230h3M393 238h3M393 246h3M393 254h3M393 262h3M393 270h3M393 278h3M393 286h3M393 294h3M393 302h3M393 310h3M393 318h3M393 326h3M393 334h3M393 342h3M393 350h3M393 358h3M393 366h3M393 374h3M393 382h3M393 390h3M393 398h3M393 406h3M393 414h3M393 422h3M393 430h3M393 438h3M393 446h3M393 454h3M393 462h3M393 470h3M393 478h3M393 486h3M393 494h3M393 502h3M393 510h3M393 518h3M393 526h3M393 534h3M393 542h3M393 550h3M393 558h3M393 566h3M393 574h3M393 582h3M393 590h3M393 598h3M393 606h3M503 222h3M503 230h3M503 238h3M503 246h3M503 254h3M503 262h3M503 270h3M503 278h3M503 286h3M503 294h3M503 302h3M503 310h3M503 318h3M503 326h3M503 334h3M503 342h3M503 350h3M503 358h3M503 366h3M503 374h3M503 382h3M503 390h3M503 398h3M503 406h3M503 414h3M503 422h3M503 430h3M503 438h3M503 446h3M503 454h3M503 462h3M503 470h3M503 478h3M503 486h3M503 494h3M503 502h3M503 510h3M503 518h3M503 526h3M503 534h3M503 542h3M503 550h3M503 558h3M503 566h3M503 574h3M503 582h3M503 590h3M503 598h3M503 606h3M613 222h3M613 230h3M613 238h3M613 246h3M613 254h3M613 262h3M613 270h3M613 278h3M613 286h3M613 294h3M613 302h3M613 310h3M613 318h3M613 326h3M613 334h3M613 342h3M613 350h3M613 358h3M613 366h3M613 374h3M613 382h3M613 390h3M613 398h3M613 406h3M613 414h3M613 422h3M613 430h3M613 438h3M613 446h3M613 454h3M613 462h3M613 470h3M613 478h3M613 486h3M613 494h3M613 502h3M613 510h3M613 518h3M613 526h3M613 534h3M613 542h3M613 550h3M613 558h3M613 566h3M613 574h3M613 582h3M613 590h3M613 598h3M613 606h3M723 222h3M723 230h3M723 238h3M723 246h3M723 254h3M723 262h3M723 270h3M723 278h3M723 286h3M723 294h3M723 302h3M723 310h3M723 318h3M723 326h3M723 334h3M723 342h3M723 350h3M723 358h3M723 366h3M723 374h3M723 382h3M723 390h3M723 398h3M723 406h3M723 414h3M723 422h3M723 430h3M723 438h3M723 446h3M723 454h3M723 462h3M723 470h3M723 478h3M723 486h3M723 494h3M723 502h3M723 510h3M723 518h3M723 526h3M723 534h3M723 542h3M723 550h3M723 558h3M723 566h3M723 574h3M723 582h3M723 590h3M723 598h3M723 606h3M833 222h3M833 230h3M833 238h3M833 246h3M833 254h3M833 262h3M833 270h3M833 278h3M833 286h3M833 294h3M833 302h3M833 310h3M833 318h3M833 326h3M833 334h3M833 342h3M833 350h3M833 358h3M833 366h3M833 374h3M833 382h3M833 390h3M833 398h3M833 406h3M833 414h3M833 422h3M833 430h3M833 438h3M833 446h3M833 454h3M833 462h3M833 470h3M833 478h3M833 486h3M833 494h3M833 502h3M833 510h3M833 518h3M833 526h3M833 534h3M833 542h3M833 550h3M833 558h3M833 566h3M833 574h3M833 582h3M833 590h3M833 598h3M833 606h3M943 222h3M943 230h3M943 238h3M943 246h3M943 254h3M943 262h3M943 270h3M943 278h3M943 286h3M943 294h3M943 302h3M943 310h3M943 318h3M943 326h3M943 334h3M943 342h3M943 350h3M943 358h3M943 366h3M943 374h3M943 382h3M943 390h3M943 398h3M943 406h3M943 414h3M943 422h3M943 430h3M943 438h3M943 446h3M943 454h3M943 462h3M943 470h3M943 478h3M943 486h3M943 494h3M943 502h3M943 510h3M943 518h3M943 526h3M943 534h3M943 542h3M943 550h3M943 558h3M943 566h3M943 574h3M943 582h3M943 590h3M943 598h3M943 606h3M1053 222h3M1053 230h3M1053 238h3M1053 246h3M1053 254h3M1053 262h3M1053 270h3M1053 278h3M1053 286h3M1053 294h3M1053 302h3M1053 310h3M1053 318h3M1053 326h3M1053 334h3M1053 342h3M1053 350h3M1053 358h3M1053 366h3M1053 374h3M1053 382h3M1053 390h3M1053 398h3M1053 406h3M1053 414h3M1053 422h3M1053 430h3M1053 438h3M1053 446h3M1053 454h3M1053 462h3M1053 470h3M1053 478h3M1053 486h3M1053 494h3M1053 502h3M1053 510h3M1053 518h3M1053 526h3M1053 534h3M1053 542h3M1053 550h3M1053 558h3M1053 566h3M1053 574h3M1053 582h3M1053 590h3M1053 598h3M1053 606h3" stroke="#1f9383" stroke-width="1" fill="none" transform="translate(0,0.5)"/>
<path d="M86 253v3M108 253v3M130 253v3M152 253v3M174 253v3M196 253v3M218 253v3M240 253v3M262 253v3M284 253v3M306 253v3M328 253v3M350 253v3M372 253v3M394 253v3M416 253v3M438 253v3M460 253v3M482 253v3M504 253v3M526 253v3M548 253v3M570 253v3M592 253v3M614 253v3M636 253v3M658 253v3M680 253v3M702 253v3M724 253v3M746 253v3M768 253v3M790 253v3M812 253v3M834 253v3M856 253v3M878 253v3M900 253v3M922 253v3M944 253v3M966 253v3M988 253v3M1010 253v3M1032 253v3M1054 253v3M1076 253v3M1098 253v3M1120 253v3M1142 253v3M86 293v3M108 293v3M130 293v3M152 293v3M174 293v3M196 293v3M218 293v3M240 293v3M262 293v3M284 293v3M306 293v3M328 293v3M350 293v3M372 293v3M394 293v3M416 293v3M438 293v3M460 293v3M482 293v3M504 293v3M526 293v3M548 293v3M570 293v3M592 293v3M614 293v3M636 293v3M658 293v3M680 293v3M702 293v3M724 293v3M746 293v3M768 293v3M790 293v3M812 293v3M834 293v3M856 293v3M878 293v3M900 293v3M922 293v3M944 293v3M966 293v3M988 293v3M1010 293v3M1032 293v3M1054 293v3M1076 293v3M1098 293v3M1120 293v3M1142 293v3M86 333v3M108 333v3M130 333v3M152 333v3M174 333v3M196 333v3M218 333v3M240 333v3M262 333v3M284 333v3M306 333v3M328 333v3M350 333v3M372 333v3M394 333v3M416 333v3M438 333v3M460 333v3M482 333v3M504 333v3M526 333v3M548 333v3M570 333v3M592 333v3M614 333v3M636 333v3M658 333v3M680 333v3M702 333v3M724 333v3M746 333v3M768 333v3M790 333v3M812 333v3M834 333v3M856 333v3M878 333v3M900 333v3M922 333v3M944 333v3M966 333v3M988 333v3M1010 333v3M1032 333v3M1054 333v3M1076 333v3M1098 333v3M1120 333v3M1142 333v3M86 373v3M108 373v3M130 373v3M152 373v3M174 373v3M196 373v3M218 373v3M240 373v3M262 373v3M284 373v3M306 373v3M328 373v3M350 373v3M372 373v3M394 373v3M416 373v3M438 373v3M460 373v3M482 373v3M504 373v3M526 373v3M548 373v3M570 373v3M592 373v3M614 373v3M636 373v3M658 373v3M680 373v3M702 373v3M724 373v3M746 373v3M768 373v3M790 373v3M812 373v3M834 373v3M856 373v3M878 373v3M900 373v3M922 373v3M944 373v3M966 373v3M988 373v3M1010 373v3M1032 373v3M1054 373v3M1076 373v3M1098 373v3M1120 373v3M1142 373v3M86 413v3M108 413v3M130 413v3M152 413v3M174 413v3M196 413v3M218 413v3M240 413v3M262 413v3M284 413v3M306 413v3M328 413v3M350 413v3M372 413v3M394 413v3M416 413v3M438 413v3M460 413v3M482 413v3M504 413v3M526 413v3M548 413v3M570 413v3M592 413v3M614 413v3M636 413v3M658 413v3M680 413v3M702 413v3M724 413v3M746 413v3M768 413v3M790 413v3M812 413v3M834 413v3M856 413v3M878 413v3M900 413v3M922 413v3M944 413v3M966 413v3M988 413v3M1010 413v3M1032 413v3M1054 413v3M1076 413v3M1098 413v3M1120 413v3M1142 413v3M86 453v3M108 453v3M130 453v3M152 453v3M174 453v3M196 453v3M218 453v3M240 453v3M262 453v3M284 453v3M306 453v3M328 453v3M350 453v3M372 453v3M394 453v3M416 453v3M438 453v3M460 453v3M482 453v3M504 453v3M526 453v3M548 453v3M570 453v3M592 453v3M614 453v3M636 453v3M658 453v3M680 453v3M702 453v3M724 453v3M746 453v3M768 453v3M790 453v3M812 453v3M834 453v3M856 453v3M878 453v3M900 453v3M922 453v3M944 453v3M966 453v3M988 453v3M1010 453v3M1032 453v3M1054 453v3M1076 453v3M1098 453v3M1120 453v3M1142 453v3M86 493v3M108 493v3M130 493v3M152 493v3M174 493v3M196 493v3M218 493v3M240 493v3M262 493v3M284 493v3M306 493v3M328 493v3M350 493v3M372 493v3M394 493v3M416 493v3M438 493v3M460 493v3M482 493v3M504 493v3M526 493v3M548 493v3M570 493v3M592 493v3M614 493v3M636 493v3M658 493v3M680 493v3M702 493v3M724 493v3M746 493v3M768 493v3M790 493v3M812 493v3M834 493v3M856 493v3M878 493v3M900 493v3M922 493v3M944 493v3M966 493v3M988 493v3M1010 493v3M1032 493v3M1054 493v3M1076 493v3M1098 493v3M1120 493v3M1142 493v3M86 533v3M108 533v3M130 533v3M152 533v3M174 533v3M196 533v3M218 533v3M240 533v3M262 533v3M284 533v3M306 533v3M328 533v3M350 533v3M372 533v3M394 533v3M416 533v3M438 533v3M460 533v3M482 533v3M504 533v3M526 533v3M548 533v3M570 533v3M592 533v3M614 533v3M636 533v3M658 533v3M680 533v3M702 533v3M724 533v3M746 533v3M768 533v3M790 533v3M812 533v3M834 533v3M856 533v3M878 533v3M900 533v3M922 533v3M944 533v3M966 533v3M988 533v3M1010 533v3M1032 533v3M1054 533v3M1076 533v3M1098 533v3M1120 533v3M1142 533v3M86 573v3M108 573v3M130 573v3M152 573v3M174 573v3M196 573v3M218 573v3M240 573v3M262 573v3M284 573v3M306 573v3M328 573v3M350 573v3M372 573v3M394 573v3M416 573v3M438 573v3M460 573v3M482 573v3M504 573v3M526 573v3M548 573v3M570 573v3M592 573v3M614 573v3M636 573v3M658 573v3M680 573v3M702 573v3M724 573v3M746 573v3M768 573v3M790 573v3M812 573v3M834 573v3M856 573v3M878 573v3M900 573v3M922 573v3M944 573v3M966 573v3M988 573v3M1010 573v3M1032 573v3M1054 573v3M1076 573v3M1098 573v3M1120 573v3M1142 573v3" stroke="#1f9383" stroke-width="1" fill="none" transform="translate(0.5,0)"/>
<rect x="20.5" y="621.5" width="151" height="55" fill="none" stroke="#1f9383" stroke-width="1"/>
<rect x="24" y="625" width="144" height="48" fill="#2b2f30"/>
<rect x="177.5" y="621.5" width="151" height="55" fill="none" stroke="#1f9383" stroke-width="1"/>
<rect x="181" y="625" width="144" height="48" fill="#2b2f30"/>
<rect x="1056.5" y="621.5" width="151" height="55" fill="none" stroke="#1f9383" stroke-width="1"/>
<rect x="1060" y="625" width="144" height="48" fill="#2b2f30"/>
<rect x="20.5" y="685.5" width="1187" height="39" fill="none" stroke="#1f9383" stroke-width="1"/>
<rect x="24" y="689" width="1180" height="32" fill="#2b2f30"/>
<path d="M32 446H57L65 454.5L57 463H32Z" fill="#00ffff"/>
<path d="M32 484H57L65 492.5L57 501H32Z" fill="#ffff00"/>
<path d="M608 198H621V211L614.5 216L608 211Z" fill="#ffff00"/>
<path d="M610 200.5H619M614.5 200V213" stroke="#2b2b2b" stroke-width="1" fill="none"/>
<path d="M640 142H653V156L650 158H643L640 156Z" fill="#ffff00"/>
<path d="M642 144.5H651M646.5 144V157" stroke="#2b2b2b" stroke-width="1" fill="none"/>
<path d="M1183 486H1171L1166 492.5L1171 499H1183Z" fill="#ffff00"/>
<path d="M1169 492.5H1181M1180.5 488V497" stroke="#2b2b2b" stroke-width="1" fill="none"/>
<path d="M64.5 484.5L65.5 479.5L65.5 484.5L66.6 479.5L67.7 484.5L68.8 484.5L69.9 479.5L71.0 484.5L72.1 484.5L73.2 479.5L74.3 484.5L75.4 479.5L76.5 484.5L77.6 479.5L78.7 484.5L79.8 479.5L80.9 484.5L82.0 484.5L83.1 479.5L84.2 479.5L85.3 484.5L86.4 479.5L87.5 484.5L88.6 484.5L89.7 479.5L90.8 479.5L91.9 484.5L93.0 484.5L94.1 479.5L95.2 484.5L96.3 484.5L97.4 484.5L98.5 484.5L99.6 484.5L100.7 479.5L101.8 484.5L102.9 484.5L104.0 484.5L105.1 479.5L106.2 484.5L107.3 479.5L108.4 484.5L109.5 484.5L111.0 484.5L112.0 523.5L112.9 561.5L113.6 561.5L114.3 556.5L115.2 561.5L123.4 561.5L124.2 526.5L125.2 484.5L128.0 484.5L129.0 479.5L130.1 484.5L138.1 484.5L139.2 479.5L140.3 479.5L141.4 484.5L142.5 484.5L143.6 479.5L144.7 484.5L145.8 484.5L146.9 479.5L148.0 484.5L149.1 484.5L150.2 484.5L151.3 479.5L152.4 484.5L153.5 484.5L154.6 484.5L155.7 479.5L156.8 484.5L157.9 484.5L159.0 479.5L160.1 484.5L161.2 484.5L162.3 484.5L163.4 479.5L164.5 484.5L165.6 484.5L166.7 479.5L167.8 484.5L168.9 484.5L170.0 479.5L171.1 484.5L172.2 484.5L173.3 479.5L174.4 484.5L175.5 484.5L176.6 479.5L177.7 484.5L178.8 484.5L179.9 479.5L181.0 484.5L182.0 525.5L182.9 561.5L183.6 561.5L184.3 556.5L185.2 561.5L193.4 561.5L194.2 526.5L195.2 484.5L203.0 484.5L204.0 479.5L205.1 484.5L210.1 484.5L211.2 479.5L212.3 484.5L213.4 484.5L214.5 479.5L215.6 479.5L216.7 484.5L217.8 479.5L218.9 484.5L220.0 484.5L221.1 479.5L222.2 484.5L223.3 479.5L224.4 479.5L225.5 484.5L226.6 484.5L227.7 479.5L228.8 484.5L229.9 484.5L231.0 479.5L232.1 484.5L233.2 484.5L234.3 479.5L235.4 479.5L236.5 484.5L237.6 484.5L238.7 479.5L239.8 479.5L240.9 484.5L242.0 484.5L243.1 479.5L244.2 484.5L245.3 484.5L246.4 479.5L247.5 484.5L248.6 484.5L249.7 479.5L251.0 484.5L252.0 525.5L252.9 561.5L253.6 561.5L254.3 556.5L255.2 561.5L263.4 561.5L264.2 523.5L265.2 484.5L270.5 484.5L271.5 479.5L272.6 484.5L279.6 484.5L280.7 479.5L281.8 484.5L282.9 484.5L284.0 484.5L285.1 479.5L286.2 479.5L287.3 484.5L288.4 484.5L289.5 484.5L290.6 479.5L291.7 484.5L292.8 484.5L293.9 479.5L295.0 484.5L296.1 484.5L297.2 484.5L298.3 479.5L299.4 479.5L300.5 484.5L301.6 479.5L302.7 484.5L303.8 484.5L304.9 479.5L306.0 484.5L307.1 484.5L308.2 479.5L309.3 484.5L310.4 484.5L311.5 479.5L312.6 484.5L313.7 484.5L314.8 479.5L315.9 484.5L317.0 484.5L318.1 479.5L319.2 479.5L320.3 484.5L321.0 484.5L322.0 520.5L322.9 561.5L330.5 561.5L331.6 556.5L332.6 561.5L333.4 561.5L334.2 526.5L335.2 484.5L349.5 484.5L350.5 479.5L351.6 484.5L351.6 484.5L352.7 479.5L353.8 484.5L354.9 484.5L356.0 479.5L357.1 484.5L358.2 479.5L359.3 484.5L360.4 479.5L361.5 484.5L362.6 479.5L363.7 484.5L364.8 479.5L365.9 484.5L367.0 484.5L368.1 479.5L369.2 484.5L370.3 484.5L371.4 484.5L372.5 479.5L373.6 484.5L374.7 479.5L375.8 484.5L376.9 484.5L378.0 479.5L379.1 484.5L380.2 479.5L381.3 479.5L382.4 484.5L383.5 484.5L384.6 484.5L385.7 484.5L386.8 484.5L387.9 479.5L389.0 484.5L390.1 484.5L391.0 484.5L392.0 520.5L392.9 561.5L393.6 561.5L394.3 556.5L395.2 561.5L403.4 561.5L404.2 526.5L405.2 484.5L415.0 484.5L416.0 479.5L417.1 484.5L417.1 484.5L418.2 479.5L419.3 484.5L420.4 484.5L421.5 479.5L422.6 484.5L423.7 484.5L424.8 484.5L425.9 484.5L427.0 484.5L428.1 479.5L429.2 484.5L430.3 484.5L431.4 479.5L432.5 479.5L433.6 484.5L434.7 484.5L435.8 484.5L436.9 479.5L438.0 484.5L439.1 484.5L440.2 479.5L441.3 484.5L442.4 484.5L443.5 484.5L444.6 479.5L445.7 484.5L446.8 484.5L447.9 484.5L449.0 479.5L450.1 484.5L451.2 484.5L452.3 479.5L453.4 484.5L454.5 484.5L455.6 479.5L456.7 484.5L457.8 484.5L458.9 479.5L460.0 479.5L461.0 484.5L462.0 523.5L462.9 561.5L473.4 561.5L474.2 523.5L475.2 484.5L487.0 484.5L488.0 479.5L489.1 484.5L490.2 484.5L491.3 484.5L492.4 479.5L493.5 484.5L494.6 479.5L495.7 484.5L496.8 484.5L497.9 479.5L499.0 484.5L500.1 484.5L501.2 484.5L502.3 484.5L503.4 484.5L504.5 479.5L505.6 484.5L506.7 484.5L507.8 484.5L508.9 479.5L510.0 479.5L511.1 484.5L512.2 484.5L513.3 484.5L514.4 484.5L515.5 484.5L516.6 479.5L517.7 484.5L518.8 484.5L519.9 479.5L521.0 484.5L522.1 479.5L523.2 484.5L524.3 484.5L525.4 479.5L526.5 479.5L527.6 484.5L528.7 484.5L529.8 484.5L531.0 484.5L532.0 525.5L532.9 561.5L543.4 561.5L544.2 523.5L545.2 484.5L548.0 484.5L549.0 479.5L550.1 484.5L551.2 484.5L552.3 484.5L553.4 484.5L554.5 479.5L555.6 479.5L556.7 484.5L557.8 484.5L558.9 479.5L560.0 484.5L561.1 484.5L562.2 484.5L563.3 479.5L564.4 484.5L565.5 484.5L566.6 484.5L567.7 479.5L568.8 479.5L569.9 484.5L571.0 484.5L572.1 479.5L573.2 484.5L574.3 484.5L575.4 484.5L576.5 479.5L577.6 479.5L578.7 484.5L579.8 479.5L580.9 484.5L582.0 479.5L583.1 479.5L584.2 484.5L585.3 484.5L586.4 484.5L587.5 479.5L588.6 484.5L589.7 484.5L590.8 484.5L591.9 479.5L593.0 479.5L594.1 484.5L595.2 484.5L596.3 479.5L597.4 484.5L598.5 484.5L599.6 479.5L601.0 484.5L602.0 520.5L602.9 561.5L613.4 561.5L614.2 526.5L615.2 484.5L617.3 484.5L618.2 301.5L619.5 303.5L620.6 307.5L621.5 301.5L622.5 465.5L623.3 357.5L624.4 480.5L625.4 407.5L626.5 480.5L627.6 296.5L628.7 480.5L629.8 296.5L631.2 300.5L632.3 363.5L633.4 479.5L635.0 438.5L636.3 470.5L637.3 296.5L638.3 479.5L639.4 296.5L640.3 296.5L641.3 341.5L642.4 460.5L643.5 326.5L644.5 337.5L645.4 479.5L651.7 479.5L652.8 484.5L653.9 484.5L655.0 479.5L656.1 479.5L657.2 484.5L658.3 484.5L659.4 479.5L660.5 479.5L661.6 484.5L662.7 484.5L663.8 484.5L664.9 479.5L666.0 484.5L667.1 484.5L668.2 479.5L669.3 484.5L670.4 484.5L671.0 484.5L672.0 523.5L672.9 561.5L673.6 561.5L674.3 556.5L675.2 561.5L683.4 561.5L684.2 523.5L685.2 484.5L691.0 484.5L692.0 482.5L693.0 479.5L694.1 400.5L695.2 321.5L696.3 420.5L697.4 479.5L698.3 400.5L699.3 301.5L700.4 410.5L701.4 479.5L703.3 479.5L704.6 301.5L705.5 317.5L706.3 420.5L707.0 479.5L710.4 479.5L711.5 485.5L713.1 454.5L714.5 478.5L715.5 484.5L716.5 480.5L717.6 484.5L718.7 479.5L719.8 479.5L720.9 484.5L722.0 484.5L723.1 484.5L724.2 479.5L725.3 484.5L726.4 484.5L727.5 484.5L728.6 479.5L729.7 484.5L730.8 484.5L731.9 484.5L733.0 479.5L734.1 479.5L735.2 484.5L736.3 479.5L737.4 484.5L738.5 484.5L739.6 479.5L741.0 484.5L742.0 523.5L742.9 561.5L753.4 561.5L754.2 523.5L755.2 484.5L757.2 484.5L757.6 403.5L758.4 321.5L759.5 449.5L760.5 377.5L761.6 311.5L762.6 400.5L763.6 467.5L764.6 485.5L765.7 431.5L766.4 342.5L767.4 301.5L768.5 317.5L769.6 400.5L770.3 470.5L771.5 367.5L772.4 430.5L773.3 480.5L774.4 440.5L775.4 397.5L776.8 480.5L778.1 440.5L779.3 316.5L780.2 377.5L781.0 440.5L781.8 377.5L782.6 311.5L783.7 360.5L784.4 444.5L785.0 479.5L794.7 479.5L795.8 479.5L796.9 484.5L798.0 484.5L799.1 479.5L800.2 484.5L801.3 484.5L802.4 479.5L803.5 484.5L804.6 484.5L805.7 479.5L806.8 479.5L807.9 484.5L809.0 479.5L810.1 484.5L811.0 484.5L812.0 523.5L812.9 561.5L813.6 561.5L814.3 556.5L815.2 561.5L823.4 561.5L824.2 523.5L825.2 484.5L828.0 484.5L828.3 439.5L829.0 347.5L830.5 301.5L831.4 305.5L832.3 332.5L833.0 475.5L836.1 485.5L839.4 470.5L840.5 301.5L841.5 347.5L842.4 479.5L844.3 479.5L845.4 311.5L846.5 363.5L847.3 434.5L848.1 479.5L849.5 301.5L850.6 464.5L851.6 326.5L852.6 334.5L853.4 350.5L854.4 470.5L855.5 367.5L856.4 424.5L857.0 479.5L858.5 485.5L859.5 479.5L863.0 479.5L864.1 484.5L865.2 484.5L866.3 479.5L867.4 479.5L868.5 484.5L869.6 484.5L870.7 484.5L871.8 479.5L872.9 484.5L874.0 484.5L875.1 479.5L876.2 484.5L877.3 484.5L878.4 479.5L879.5 484.5L881.0 484.5L882.0 525.5L882.9 561.5L890.5 561.5L891.6 556.5L892.6 561.5L893.4 561.5L894.2 523.5L895.2 484.5L901.0 485.5L902.0 482.5L902.5 451.5L903.4 423.5L904.5 464.5L905.4 455.5L906.3 443.5L907.2 462.5L908.0 479.5L909.3 413.5L910.7 479.5L911.6 479.5L912.1 428.5L912.4 377.5L914.4 331.5L915.3 342.5L916.2 409.5L916.4 472.5L917.5 479.5L919.0 474.5L920.5 479.5L923.3 479.5L923.8 449.5L924.3 370.5L925.5 316.5L926.3 398.5L927.2 484.5L928.3 484.5L929.4 484.5L930.5 484.5L931.6 479.5L932.7 479.5L933.8 484.5L934.9 484.5L936.0 479.5L937.1 484.5L938.2 484.5L939.3 484.5L940.4 479.5L941.5 479.5L942.6 484.5L943.7 479.5L944.8 484.5L945.9 484.5L947.0 479.5L948.1 484.5L949.2 484.5L950.3 479.5L951.0 484.5L952.0 523.5L952.9 561.5L963.4 561.5L964.2 523.5L965.2 484.5L967.7 484.5L968.2 469.5L968.7 451.5L969.2 382.5L970.5 316.5L971.5 356.5L972.5 301.5L973.1 413.5L973.6 479.5L974.5 430.5L975.4 377.5L976.4 464.5L977.5 301.5L978.5 327.5L979.6 471.5L980.6 400.5L981.5 331.5L982.5 476.5L984.0 485.5L985.4 350.5L986.5 306.5L987.3 479.5L988.3 460.5L989.3 448.5L990.2 467.5L990.9 484.5L991.8 480.5L992.6 479.5L993.5 382.5L994.6 301.5L995.5 355.5L996.4 425.5L997.0 479.5L1003.3 479.5L1004.4 484.5L1005.5 484.5L1006.6 479.5L1007.7 484.5L1008.8 484.5L1009.9 479.5L1011.0 484.5L1012.1 484.5L1013.2 479.5L1014.3 479.5L1015.4 484.5L1016.5 479.5L1017.6 479.5L1018.7 484.5L1019.8 479.5L1021.0 484.5L1022.0 523.5L1022.9 561.5L1023.6 561.5L1024.3 556.5L1025.2 561.5L1033.4 561.5L1034.2 523.5L1035.2 484.5L1037.5 484.5L1038.5 479.5L1039.6 484.5L1047.0 484.5L1048.0 479.5L1049.1 484.5L1060.6 484.5L1061.7 479.5L1062.8 484.5L1063.9 479.5L1065.0 484.5L1066.1 484.5L1067.2 479.5L1068.3 484.5L1069.4 484.5L1070.5 479.5L1071.6 484.5L1072.7 484.5L1073.8 479.5L1074.9 484.5L1076.0 484.5L1077.1 484.5L1078.2 484.5L1079.3 484.5L1080.4 479.5L1081.5 484.5L1082.6 484.5L1083.7 484.5L1084.8 479.5L1085.9 484.5L1087.0 484.5L1088.1 484.5L1089.2 479.5L1090.3 484.5L1091.0 484.5L1092.0 523.5L1092.9 561.5L1093.6 561.5L1094.3 556.5L1095.2 561.5L1103.4 561.5L1104.2 523.5L1105.2 484.5L1112.5 484.5L1113.5 479.5L1114.6 484.5L1117.6 484.5L1118.7 479.5L1119.8 484.5L1120.9 484.5L1122.0 479.5L1123.1 484.5L1124.2 484.5L1125.3 479.5L1126.4 484.5L1127.5 484.5L1128.6 484.5L1129.7 479.5L1130.8 484.5L1131.9 484.5L1133.0 484.5L1134.1 479.5L1135.2 484.5L1136.3 479.5L1137.4 484.5L1138.5 484.5L1139.6 479.5L1140.7 484.5L1141.8 484.5L1142.9 479.5L1144.0 484.5L1145.1 479.5L1146.2 484.5L1147.3 484.5L1148.4 484.5L1149.5 484.5L1150.6 484.5L1151.7 479.5L1152.8 484.5L1153.9 484.5L1155.0 484.5L1156.1 479.5L1157.2 484.5L1158.3 479.5L1159.4 479.5L1160.5 484.5L1161.0 484.5L1161.5 500.5L1162.2 525.5" stroke="#ffff00" stroke-width="1" fill="none" stroke-linejoin="miter"/>
<path d="M1105 130H1109V118H1114" stroke="#ffff00" stroke-width="2" fill="none"/>
</g><g>
<path d="M1105.300 126.200L1109 122.200L1113.700 126.400" stroke="#ffff00" stroke-width="2" fill="none"/>
</g>
</svg>
<span class="abs" style="left:22.50px;top:116.10px;font-family:'Liberation Serif','DejaVu Serif',serif;font-size:14px;line-height:18px;color:#ffff00;transform:scaleX(0.9553);transform-origin:0 0;white-space:pre;">Run</span>
<span class="abs" style="left:1069.40px;top:116.10px;font-family:'Liberation Serif','DejaVu Serif',serif;font-size:14px;line-height:18px;color:#ffff00;transform:scaleX(0.9500);transform-origin:0 0;white-space:pre;">Auto</span>
<span class="abs" style="left:1121.25px;top:116.10px;font-family:'Liberation Serif','DejaVu Serif',serif;font-size:14px;line-height:18px;color:#ffff00;transform:scaleX(0.8808);transform-origin:0 0;white-space:pre;">CH1</span>
<span class="abs" style="left:1151.25px;top:116.10px;font-family:'Liberation Serif','DejaVu Serif',serif;font-size:14px;line-height:18px;color:#ffff00;transform:scaleX(0.9905);transform-origin:0 0;white-space:pre;">0.000</span>
<span class="abs" style="left:1187.00px;top:116.10px;font-family:'Liberation Serif','DejaVu Serif',serif;font-size:14px;line-height:18px;color:#ffff00;transform:scaleX(0.9524);transform-origin:0 0;white-space:pre;">mV</span>
<span class="abs" style="left:33.30px;top:447.00px;font-family:'Liberation Serif','DejaVu Serif',serif;font-size:11.5px;line-height:14px;color:#2a3a3a;transform:scaleX(0.9064);transform-origin:0 0;white-space:pre;">CH2</span>
<span class="abs" style="left:33.30px;top:485.00px;font-family:'Liberation Serif','DejaVu Serif',serif;font-size:11.5px;line-height:14px;color:#3a3a10;transform:scaleX(0.9064);transform-origin:0 0;white-space:pre;">CH1</span>
<span class="abs" style="left:24.50px;top:625.10px;font-family:'Liberation Serif','DejaVu Serif',serif;font-size:14px;line-height:18px;color:#ffff00;transform:scaleX(0.8884);transform-origin:0 0;white-space:pre;">CH1</span>
<span class="abs" style="left:124.25px;top:625.10px;font-family:'Liberation Serif','DejaVu Serif',serif;font-size:14px;line-height:18px;color:#ffff00;transform:scaleX(0.8876);transform-origin:0 0;white-space:pre;">X1</span>
<span class="abs" style="left:149.25px;top:625.10px;font-family:'Liberation Serif','DejaVu Serif',serif;font-size:14px;line-height:18px;color:#ffff00;transform:scaleX(0.9613);transform-origin:0 0;white-space:pre;">DC</span>
<span class="abs" style="left:102.50px;top:641.10px;font-family:'Liberation Serif','DejaVu Serif',serif;font-size:14px;line-height:18px;color:#ffff00;transform:scaleX(0.9661);transform-origin:0 0;white-space:pre;">200 mV/div</span>
<span class="abs" style="left:100.75px;top:657.10px;font-family:'Liberation Serif','DejaVu Serif',serif;font-size:14px;line-height:18px;color:#ffff00;transform:scaleX(0.9930);transform-origin:0 0;white-space:pre;">-390.00 mV</span>
<span class="abs" style="left:181.00px;top:625.10px;font-family:'Liberation Serif','DejaVu Serif',serif;font-size:14px;line-height:18px;color:#00ffff;transform:scaleX(0.9262);transform-origin:0 0;white-space:pre;">CH2</span>
<span class="abs" style="left:285.00px;top:641.10px;font-family:'Liberation Serif','DejaVu Serif',serif;font-size:14px;line-height:18px;color:#00ffff;transform:scaleX(0.9492);transform-origin:0 0;white-space:pre;">1 V/div</span>
<span class="abs" style="left:282.50px;top:657.10px;font-family:'Liberation Serif','DejaVu Serif',serif;font-size:14px;line-height:18px;color:#00ffff;transform:scaleX(0.9993);transform-origin:0 0;white-space:pre;">-1.00 V</span>
<span class="abs" style="left:1060.60px;top:625.10px;font-family:'Liberation Serif','DejaVu Serif',serif;font-size:14px;line-height:18px;color:#ffff00;transform:scaleX(0.9772);transform-origin:0 0;white-space:pre;">Time</span>
<span class="abs" style="left:1145.90px;top:641.10px;font-family:'Liberation Serif','DejaVu Serif',serif;font-size:14px;line-height:18px;color:#ffff00;transform:scaleX(0.9824);transform-origin:0 0;white-space:pre;">100 us/div</span>
<span class="abs" style="left:1060.60px;top:657.10px;font-family:'Liberation Serif','DejaVu Serif',serif;font-size:14px;line-height:18px;color:#ffff00;transform:scaleX(0.9122);transform-origin:0 0;white-space:pre;">125KB</span>
<span class="abs" style="left:1157.90px;top:657.10px;font-family:'Liberation Serif','DejaVu Serif',serif;font-size:14px;line-height:18px;color:#ffff00;transform:scaleX(0.9871);transform-origin:0 0;white-space:pre;">1 MSa/s</span>
<span class="abs" style="left:24.25px;top:689.10px;font-family:'Liberation Serif','DejaVu Serif',serif;font-size:14px;line-height:18px;color:#ffff00;transform:scaleX(0.9877);transform-origin:0 0;white-space:pre;">Vmin= -346.667 mV</span>
<span class="abs" style="left:168.25px;top:689.10px;font-family:'Liberation Serif','DejaVu Serif',serif;font-size:14px;line-height:18px;color:#ffff00;transform:scaleX(0.9883);transform-origin:0 0;white-space:pre;">Vmax= 115.980 mV</span>
<span class="abs" style="left:312.00px;top:689.10px;font-family:'Liberation Serif','DejaVu Serif',serif;font-size:14px;line-height:18px;color:#ffff00;transform:scaleX(0.9880);transform-origin:0 0;white-space:pre;">Vpp= 462.647 mV</span>
<span class="abs" style="left:456.25px;top:689.10px;font-family:'Liberation Serif','DejaVu Serif',serif;font-size:14px;line-height:18px;color:#ffff00;transform:scaleX(0.9900);transform-origin:0 0;white-space:pre;">F= 15.699 KHz</span>
<span class="abs" style="left:24.25px;top:705.10px;font-family:'Liberation Serif','DejaVu Serif',serif;font-size:14px;line-height:18px;color:#00ffff;transform:scaleX(0.9678);transform-origin:0 0;white-space:pre;">Vmin= ****</span>
<span class="abs" style="left:168.25px;top:705.10px;font-family:'Liberation Serif','DejaVu Serif',serif;font-size:14px;line-height:18px;color:#00ffff;transform:scaleX(0.9747);transform-origin:0 0;white-space:pre;">Vmax= ****</span>
<span class="abs" style="left:312.00px;top:705.10px;font-family:'Liberation Serif','DejaVu Serif',serif;font-size:14px;line-height:18px;color:#00ffff;transform:scaleX(0.9801);transform-origin:0 0;white-space:pre;">Vpp= ****</span>
<span class="abs" style="left:456.25px;top:705.10px;font-family:'Liberation Serif','DejaVu Serif',serif;font-size:14px;line-height:18px;color:#00ffff;transform:scaleX(1.0033);transform-origin:0 0;white-space:pre;">F= 0.000 Hz</span>
<div class="abs" style="left:1217px;top:109px;width:216px;height:623px;background:#f0f0f0"></div>
<div class="abs" style="left:1217px;top:109px;width:2px;height:623px;background:#fbfbfb"></div>
<div class="abs" style="left:1430px;top:109px;width:2px;height:623px;background:#fff"></div>

<div class="abs" style="left:1219px;top:115px;width:209px;height:32px;border:1px solid #d5dfe5;border-radius:3px;box-shadow:inset 0 0 0 1px #fff"></div>
<div class="abs" style="left:1219px;top:152px;width:209px;height:82px;border:1px solid #d5dfe5;border-radius:3px;box-shadow:inset 0 0 0 1px #fff"></div>
<div class="abs" style="left:1219px;top:238px;width:209px;height:80px;border:1px solid #d5dfe5;border-radius:3px;box-shadow:inset 0 0 0 1px #fff"></div>
<div class="abs" style="left:1219px;top:324px;width:209px;height:89px;border:1px solid #d5dfe5;border-radius:3px;box-shadow:inset 0 0 0 1px #fff"></div>
<div class="abs" style="left:1219px;top:417px;width:209px;height:316px;border:1px solid #d5dfe5;border-radius:3px;box-shadow:inset 0 0 0 1px #fff;border-bottom:none;border-radius:3px 3px 0 0"></div>
<div class="abs" style="left:1242px;top:121px;width:58px;height:21px;border:1px solid #707070;border-radius:3px;background:linear-gradient(to bottom,#f2f2f2 0,#ebebeb 48%,#dddddd 52%,#cfcfcf 100%);box-shadow:inset 0 0 0 1px rgba(255,255,255,.95)"></div>
<div class="abs" style="left:1349px;top:121px;width:55px;height:21px;border:1px solid #707070;border-radius:3px;background:linear-gradient(to bottom,#f2f2f2 0,#ebebeb 48%,#dddddd 52%,#cfcfcf 100%);box-shadow:inset 0 0 0 1px rgba(255,255,255,.95)"></div>
<span class="abs" style="left:1260.00px;top:125.00px;font-family:'Liberation Sans','DejaVu Sans',sans-serif;font-size:11px;line-height:14px;color:#000;letter-spacing:-0.410px;white-space:pre;">Auto</span>
<span class="abs" style="left:1361.00px;top:125.00px;font-family:'Liberation Sans','DejaVu Sans',sans-serif;font-size:11px;line-height:14px;color:#000;letter-spacing:-0.321px;white-space:pre;">Pause</span>
<div class="abs" style="left:1223px;top:156px;width:51px;height:21px;border:1px solid #2c628b;border-radius:3px;background:linear-gradient(to bottom,#dcf0fa 0,#aedbf2 48%,#5aacdc 52%,#7cc2e7 100%);box-shadow:inset 0 0 0 1px rgba(160,225,250,.9)"></div>
<svg class="abs" style="left:1227.3px;top:157.7px" width="18" height="18" viewBox="0 0 18 18"><circle cx="9" cy="9" r="6.700" fill="#00ff00" stroke="#111" stroke-width="1.200"/><path d="M5.800 8.600 L8.600 5.400" fill="none" stroke="#fff" stroke-width="1.700" stroke-linecap="round" opacity=".95"/></svg>
<span class="abs" style="left:1247.50px;top:159.50px;font-family:'Liberation Sans','DejaVu Sans',sans-serif;font-size:11px;line-height:14px;color:#000;letter-spacing:-0.505px;white-space:pre;">CH1</span>
<div class="abs" style="left:1222px;top:182px;width:53px;height:21px;border:1px solid #3c3c3c;border-radius:2px;background:linear-gradient(to bottom,#f2f2f2 0,#ebebeb 48%,#dddddd 52%,#cfcfcf 100%);box-shadow:inset 0 0 0 1px rgba(255,255,255,.9)"></div><svg class="abs" style="left:1262.6px;top:190.7px" width="8" height="5" viewBox="0 0 8 5"><path d="M0.2 0.4H7.8L4 4.6Z" fill="#000"/></svg>
<span class="abs" style="left:1225.80px;top:186.00px;font-family:'Liberation Sans','DejaVu Sans',sans-serif;font-size:11px;line-height:14px;color:#000;letter-spacing:-1.000px;white-space:pre;">X1</span>
<div class="abs" style="left:1223px;top:211px;width:51px;height:21px;border:1px solid #707070;border-radius:3px;background:linear-gradient(to bottom,#f2f2f2 0,#ebebeb 48%,#dddddd 52%,#cfcfcf 100%);box-shadow:inset 0 0 0 1px rgba(255,255,255,.95)"></div>
<span class="abs" style="left:1227.40px;top:214.50px;font-family:'Liberation Sans','DejaVu Sans',sans-serif;font-size:11px;line-height:14px;color:#000;letter-spacing:-0.491px;white-space:pre;">More</span>
<svg class="abs" style="left:1257.5px;top:219px" width="10" height="6" viewBox="0 0 10 6"><path d="M0.5 0.5H9.5L5 5.5Z" fill="#4a6fb6"/></svg>
<div class="abs" style="left:1223px;top:240.5px;width:51px;height:20.5px;border:1px solid #707070;border-radius:3px;background:linear-gradient(to bottom,#f2f2f2 0,#ebebeb 48%,#dddddd 52%,#cfcfcf 100%);box-shadow:inset 0 0 0 1px rgba(255,255,255,.95)"></div>
<svg class="abs" style="left:1227.3px;top:241.8px" width="18" height="18" viewBox="0 0 18 18"><circle cx="9" cy="9" r="6.700" fill="#007c00" stroke="#111" stroke-width="1.200"/><path d="M5.800 8.600 L8.600 5.400" fill="none" stroke="#fff" stroke-width="1.700" stroke-linecap="round" opacity=".95"/></svg>
<span class="abs" style="left:1247.50px;top:244.00px;font-family:'Liberation Sans','DejaVu Sans',sans-serif;font-size:11px;line-height:14px;color:#000;letter-spacing:-0.505px;white-space:pre;">CH2</span>
<div class="abs" style="left:1222px;top:267px;width:53px;height:21px;border:1px solid #3c3c3c;border-radius:2px;background:linear-gradient(to bottom,#f2f2f2 0,#ebebeb 48%,#dddddd 52%,#cfcfcf 100%);box-shadow:inset 0 0 0 1px rgba(255,255,255,.9)"></div><svg class="abs" style="left:1262.6px;top:275.7px" width="8" height="5" viewBox="0 0 8 5"><path d="M0.2 0.4H7.8L4 4.6Z" fill="#000"/></svg>
<span class="abs" style="left:1225.80px;top:271.00px;font-family:'Liberation Sans','DejaVu Sans',sans-serif;font-size:11px;line-height:14px;color:#000;letter-spacing:-1.000px;white-space:pre;">X1</span>
<div class="abs" style="left:1223px;top:297px;width:51px;height:21px;border:1px solid #707070;border-radius:3px;background:linear-gradient(to bottom,#f2f2f2 0,#ebebeb 48%,#dddddd 52%,#cfcfcf 100%);box-shadow:inset 0 0 0 1px rgba(255,255,255,.95)"></div>
<span class="abs" style="left:1227.40px;top:300.50px;font-family:'Liberation Sans','DejaVu Sans',sans-serif;font-size:11px;line-height:14px;color:#000;letter-spacing:-0.491px;white-space:pre;">More</span>
<svg class="abs" style="left:1257.5px;top:305px" width="10" height="6" viewBox="0 0 10 6"><path d="M0.5 0.5H9.5L5 5.5Z" fill="#4a6fb6"/></svg>
<div class="abs" style="left:1223px;top:385px;width:51px;height:21px;border:1px solid #707070;border-radius:3px;background:linear-gradient(to bottom,#f2f2f2 0,#ebebeb 48%,#dddddd 52%,#cfcfcf 100%);box-shadow:inset 0 0 0 1px rgba(255,255,255,.95)"></div>
<span class="abs" style="left:1227.40px;top:388.50px;font-family:'Liberation Sans','DejaVu Sans',sans-serif;font-size:11px;line-height:14px;color:#000;letter-spacing:-0.491px;white-space:pre;">More</span>
<svg class="abs" style="left:1257.5px;top:393px" width="10" height="6" viewBox="0 0 10 6"><path d="M0.5 0.5H9.5L5 5.5Z" fill="#4a6fb6"/></svg>
<svg class="abs" style="left:1330.6px;top:163.7px" width="69.6" height="69.6" viewBox="1330.6 163.7 69.6 69.6"><defs><linearGradient id="kg1563" x1="0.15" y1="0.1" x2="0.85" y2="0.9"><stop offset="0" stop-color="#f1f1f1"/><stop offset=".5" stop-color="#e3e3e3"/><stop offset="1" stop-color="#cdcdcd"/></linearGradient><linearGradient id="kg1563d" x1="0" y1="0" x2="0" y2="1"><stop offset="0" stop-color="#fff" stop-opacity=".16"/><stop offset="1" stop-color="#000" stop-opacity=".22"/></linearGradient></defs><circle cx="1365.4" cy="198.5" r="20.8" fill="url(#kg1563)"/><line x1="1349.84" y1="214.06" x2="1345.11" y2="218.79" stroke="#222" stroke-width="1.1"/><line x1="1344.15" y1="204.19" x2="1340.77" y2="205.10" stroke="#222" stroke-width="1"/><line x1="1344.15" y1="192.81" x2="1340.77" y2="191.90" stroke="#222" stroke-width="1"/><line x1="1349.84" y1="182.94" x2="1345.11" y2="178.21" stroke="#222" stroke-width="1.1"/><line x1="1359.71" y1="177.25" x2="1358.80" y2="173.87" stroke="#222" stroke-width="1"/><line x1="1371.09" y1="177.25" x2="1372.00" y2="173.87" stroke="#222" stroke-width="1"/><line x1="1380.96" y1="182.94" x2="1385.69" y2="178.21" stroke="#222" stroke-width="1.1"/><line x1="1386.65" y1="192.81" x2="1390.03" y2="191.90" stroke="#222" stroke-width="1"/><line x1="1386.65" y1="204.19" x2="1390.03" y2="205.10" stroke="#222" stroke-width="1"/><line x1="1380.96" y1="214.06" x2="1385.69" y2="218.79" stroke="#222" stroke-width="1.1"/><circle cx="1361.7" cy="186.6" r="5" fill="#556b2f"/><circle cx="1361.7" cy="186.6" r="5" fill="url(#kg1563d)"/></svg>
<svg class="abs" style="left:1330.6px;top:250.4px" width="69.6" height="69.6" viewBox="1330.6 250.4 69.6 69.6"><defs><linearGradient id="kg1650" x1="0.15" y1="0.1" x2="0.85" y2="0.9"><stop offset="0" stop-color="#f1f1f1"/><stop offset=".5" stop-color="#e3e3e3"/><stop offset="1" stop-color="#cdcdcd"/></linearGradient><linearGradient id="kg1650d" x1="0" y1="0" x2="0" y2="1"><stop offset="0" stop-color="#fff" stop-opacity=".16"/><stop offset="1" stop-color="#000" stop-opacity=".22"/></linearGradient></defs><circle cx="1365.4" cy="285.2" r="20.8" fill="url(#kg1650)"/><line x1="1349.84" y1="300.76" x2="1345.11" y2="305.49" stroke="#222" stroke-width="1.1"/><line x1="1344.15" y1="290.89" x2="1340.77" y2="291.80" stroke="#222" stroke-width="1"/><line x1="1344.15" y1="279.51" x2="1340.77" y2="278.60" stroke="#222" stroke-width="1"/><line x1="1349.84" y1="269.64" x2="1345.11" y2="264.91" stroke="#222" stroke-width="1.1"/><line x1="1359.71" y1="263.95" x2="1358.80" y2="260.57" stroke="#222" stroke-width="1"/><line x1="1371.09" y1="263.95" x2="1372.00" y2="260.57" stroke="#222" stroke-width="1"/><line x1="1380.96" y1="269.64" x2="1385.69" y2="264.91" stroke="#222" stroke-width="1.1"/><line x1="1386.65" y1="279.51" x2="1390.03" y2="278.60" stroke="#222" stroke-width="1"/><line x1="1386.65" y1="290.89" x2="1390.03" y2="291.80" stroke="#222" stroke-width="1"/><line x1="1380.96" y1="300.76" x2="1385.69" y2="305.49" stroke="#222" stroke-width="1.1"/><circle cx="1373.4" cy="276.5" r="5" fill="#556b2f"/><circle cx="1373.4" cy="276.5" r="5" fill="url(#kg1650d)"/></svg>
<svg class="abs" style="left:1321.4px;top:336.4px" width="74.2" height="74.2" viewBox="1321.4 336.4 74.2 74.2"><defs><linearGradient id="kg1732" x1="0.15" y1="0.1" x2="0.85" y2="0.9"><stop offset="0" stop-color="#f1f1f1"/><stop offset=".5" stop-color="#e3e3e3"/><stop offset="1" stop-color="#cdcdcd"/></linearGradient><linearGradient id="kg1732d" x1="0" y1="0" x2="0" y2="1"><stop offset="0" stop-color="#fff" stop-opacity=".16"/><stop offset="1" stop-color="#000" stop-opacity=".22"/></linearGradient></defs><circle cx="1358.5" cy="373.5" r="23.1" fill="url(#kg1732)"/><line x1="1341.81" y1="390.19" x2="1337.00" y2="395.00" stroke="#222" stroke-width="1.1"/><line x1="1339.17" y1="387.04" x2="1336.55" y2="388.87" stroke="#222" stroke-width="1"/><line x1="1337.11" y1="383.47" x2="1334.21" y2="384.83" stroke="#222" stroke-width="1"/><line x1="1335.70" y1="379.61" x2="1329.14" y2="381.37" stroke="#222" stroke-width="1.1"/><line x1="1334.99" y1="375.56" x2="1331.80" y2="375.84" stroke="#222" stroke-width="1"/><line x1="1334.99" y1="371.44" x2="1331.80" y2="371.16" stroke="#222" stroke-width="1"/><line x1="1335.70" y1="367.39" x2="1329.14" y2="365.63" stroke="#222" stroke-width="1.1"/><line x1="1337.11" y1="363.53" x2="1334.21" y2="362.17" stroke="#222" stroke-width="1"/><line x1="1339.17" y1="359.96" x2="1336.55" y2="358.13" stroke="#222" stroke-width="1"/><line x1="1341.81" y1="356.81" x2="1337.00" y2="352.00" stroke="#222" stroke-width="1.1"/><line x1="1344.96" y1="354.17" x2="1343.13" y2="351.55" stroke="#222" stroke-width="1"/><line x1="1348.53" y1="352.11" x2="1347.17" y2="349.21" stroke="#222" stroke-width="1"/><line x1="1352.39" y1="350.70" x2="1350.63" y2="344.14" stroke="#222" stroke-width="1.1"/><line x1="1356.44" y1="349.99" x2="1356.16" y2="346.80" stroke="#222" stroke-width="1"/><line x1="1360.56" y1="349.99" x2="1360.84" y2="346.80" stroke="#222" stroke-width="1"/><line x1="1364.61" y1="350.70" x2="1366.37" y2="344.14" stroke="#222" stroke-width="1.1"/><line x1="1368.47" y1="352.11" x2="1369.83" y2="349.21" stroke="#222" stroke-width="1"/><line x1="1372.04" y1="354.17" x2="1373.87" y2="351.55" stroke="#222" stroke-width="1"/><line x1="1375.19" y1="356.81" x2="1380.00" y2="352.00" stroke="#222" stroke-width="1.1"/><line x1="1377.83" y1="359.96" x2="1380.45" y2="358.13" stroke="#222" stroke-width="1"/><line x1="1379.89" y1="363.53" x2="1382.79" y2="362.17" stroke="#222" stroke-width="1"/><line x1="1381.30" y1="367.39" x2="1387.86" y2="365.63" stroke="#222" stroke-width="1.1"/><line x1="1382.01" y1="371.44" x2="1385.20" y2="371.16" stroke="#222" stroke-width="1"/><line x1="1382.01" y1="375.56" x2="1385.20" y2="375.84" stroke="#222" stroke-width="1"/><line x1="1381.30" y1="379.61" x2="1387.86" y2="381.37" stroke="#222" stroke-width="1.1"/><line x1="1379.89" y1="383.47" x2="1382.79" y2="384.83" stroke="#222" stroke-width="1"/><line x1="1377.83" y1="387.04" x2="1380.45" y2="388.87" stroke="#222" stroke-width="1"/><line x1="1375.19" y1="390.19" x2="1380.00" y2="395.00" stroke="#222" stroke-width="1.1"/><circle cx="1354.5" cy="359.8" r="5" fill="#22a62a"/><circle cx="1354.5" cy="359.8" r="5" fill="url(#kg1732d)"/></svg>
<span class="abs" style="left:1304.80px;top:170.00px;font-family:'Liberation Serif','DejaVu Serif',serif;font-size:13.6px;line-height:17px;color:#000;transform:scaleX(0.8460);transform-origin:0 0;white-space:pre;-webkit-text-stroke:0.25px #000;">100mV</span>
<span class="abs" style="left:1387.70px;top:170.00px;font-family:'Liberation Serif','DejaVu Serif',serif;font-size:13.6px;line-height:17px;color:#000;transform:scaleX(0.8000);transform-origin:0 0;white-space:pre;-webkit-text-stroke:0.25px #000;">1V</span>
<span class="abs" style="left:1310.70px;top:209.00px;font-family:'Liberation Serif','DejaVu Serif',serif;font-size:13.6px;line-height:17px;color:#000;transform:scaleX(0.8416);transform-origin:0 0;white-space:pre;-webkit-text-stroke:0.25px #000;">10mV</span>
<span class="abs" style="left:1387.70px;top:209.00px;font-family:'Liberation Serif','DejaVu Serif',serif;font-size:13.6px;line-height:17px;color:#000;transform:scaleX(0.8411);transform-origin:0 0;white-space:pre;-webkit-text-stroke:0.25px #000;">10V</span>
<span class="abs" style="left:1304.80px;top:257.00px;font-family:'Liberation Serif','DejaVu Serif',serif;font-size:13.6px;line-height:17px;color:#000;transform:scaleX(0.8460);transform-origin:0 0;white-space:pre;-webkit-text-stroke:0.25px #000;">100mV</span>
<span class="abs" style="left:1387.70px;top:257.00px;font-family:'Liberation Serif','DejaVu Serif',serif;font-size:13.6px;line-height:17px;color:#000;transform:scaleX(0.8000);transform-origin:0 0;white-space:pre;-webkit-text-stroke:0.25px #000;">1V</span>
<span class="abs" style="left:1310.70px;top:296.00px;font-family:'Liberation Serif','DejaVu Serif',serif;font-size:13.6px;line-height:17px;color:#000;transform:scaleX(0.8416);transform-origin:0 0;white-space:pre;-webkit-text-stroke:0.25px #000;">10mV</span>
<span class="abs" style="left:1387.70px;top:296.00px;font-family:'Liberation Serif','DejaVu Serif',serif;font-size:13.6px;line-height:17px;color:#000;transform:scaleX(0.8411);transform-origin:0 0;white-space:pre;-webkit-text-stroke:0.25px #000;">10V</span>
<span class="abs" style="left:1327.90px;top:329.00px;font-family:'Liberation Serif','DejaVu Serif',serif;font-size:13.6px;line-height:17px;color:#000;transform:scaleX(0.9697);transform-origin:0 0;white-space:pre;-webkit-text-stroke:0.25px #000;">100us</span>
<span class="abs" style="left:1366.60px;top:329.00px;font-family:'Liberation Serif','DejaVu Serif',serif;font-size:13.6px;line-height:17px;color:#000;transform:scaleX(0.9880);transform-origin:0 0;white-space:pre;-webkit-text-stroke:0.25px #000;">1ms</span>
<span class="abs" style="left:1307.30px;top:340.50px;font-family:'Liberation Serif','DejaVu Serif',serif;font-size:13.6px;line-height:17px;color:#000;transform:scaleX(0.9616);transform-origin:0 0;white-space:pre;-webkit-text-stroke:0.25px #000;">10us</span>
<span class="abs" style="left:1381.80px;top:342.00px;font-family:'Liberation Serif','DejaVu Serif',serif;font-size:13.6px;line-height:17px;color:#000;transform:scaleX(0.9909);transform-origin:0 0;white-space:pre;-webkit-text-stroke:0.25px #000;">10ms</span>
<span class="abs" style="left:1307.30px;top:354.50px;font-family:'Liberation Serif','DejaVu Serif',serif;font-size:13.6px;line-height:17px;color:#000;transform:scaleX(0.9476);transform-origin:0 0;white-space:pre;-webkit-text-stroke:0.25px #000;">1us</span>
<span class="abs" style="left:1389.00px;top:356.00px;font-family:'Liberation Serif','DejaVu Serif',serif;font-size:13.6px;line-height:17px;color:#000;transform:scaleX(0.9872);transform-origin:0 0;white-space:pre;-webkit-text-stroke:0.25px #000;">100ms</span>
<span class="abs" style="left:1293.20px;top:369.00px;font-family:'Liberation Serif','DejaVu Serif',serif;font-size:13.6px;line-height:17px;color:#000;transform:scaleX(0.9851);transform-origin:0 0;white-space:pre;-webkit-text-stroke:0.25px #000;">100ns</span>
<span class="abs" style="left:1389.00px;top:370.50px;font-family:'Liberation Serif','DejaVu Serif',serif;font-size:13.6px;line-height:17px;color:#000;transform:scaleX(0.9096);transform-origin:0 0;white-space:pre;-webkit-text-stroke:0.25px #000;">1s</span>
<span class="abs" style="left:1307.30px;top:383.00px;font-family:'Liberation Serif','DejaVu Serif',serif;font-size:13.6px;line-height:17px;color:#000;transform:scaleX(0.9616);transform-origin:0 0;white-space:pre;-webkit-text-stroke:0.25px #000;">10ns</span>
<span class="abs" style="left:1381.80px;top:384.50px;font-family:'Liberation Serif','DejaVu Serif',serif;font-size:13.6px;line-height:17px;color:#000;transform:scaleX(0.9740);transform-origin:0 0;white-space:pre;-webkit-text-stroke:0.25px #000;">10s</span>
<span class="abs" style="left:1225.20px;top:424.00px;font-family:'Liberation Sans','DejaVu Sans',sans-serif;font-size:11px;line-height:14px;color:#000;letter-spacing:-0.251px;white-space:pre;">Trigger Mode</span>
<span class="abs" style="left:1225.20px;top:450.00px;font-family:'Liberation Sans','DejaVu Sans',sans-serif;font-size:11px;line-height:14px;color:#000;letter-spacing:-0.260px;white-space:pre;">Trigger Source</span>
<span class="abs" style="left:1225.20px;top:475.00px;font-family:'Liberation Sans','DejaVu Sans',sans-serif;font-size:11px;line-height:14px;color:#000;letter-spacing:-0.166px;white-space:pre;">Trigger Style</span>
<span class="abs" style="left:1225.20px;top:502.00px;font-family:'Liberation Sans','DejaVu Sans',sans-serif;font-size:11px;line-height:14px;color:#000;letter-spacing:-0.231px;white-space:pre;">Trigger Level</span>
<span class="abs" style="left:1225.20px;top:543.50px;font-family:'Liberation Sans','DejaVu Sans',sans-serif;font-size:11px;line-height:14px;color:#000;letter-spacing:-0.023px;white-space:pre;">Trigger Sensitivity(0-1.0)</span>
<span class="abs" style="left:1225.00px;top:585.50px;font-family:'Liberation Sans','DejaVu Sans',sans-serif;font-size:11px;line-height:14px;color:#000;letter-spacing:-0.055px;white-space:pre;">Trigger Front Percent(1-99)</span>
<div class="abs" style="left:1297px;top:421px;width:124.5px;height:20.5px;border:1px solid #3c3c3c;border-radius:2px;background:linear-gradient(to bottom,#f2f2f2 0,#ebebeb 48%,#dddddd 52%,#cfcfcf 100%);box-shadow:inset 0 0 0 1px rgba(255,255,255,.9)"></div><svg class="abs" style="left:1409.1px;top:429.45px" width="8" height="5" viewBox="0 0 8 5"><path d="M0.2 0.4H7.8L4 4.6Z" fill="#000"/></svg>
<div class="abs" style="left:1297px;top:445px;width:124.5px;height:20.5px;border:1px solid #3c3c3c;border-radius:2px;background:linear-gradient(to bottom,#f2f2f2 0,#ebebeb 48%,#dddddd 52%,#cfcfcf 100%);box-shadow:inset 0 0 0 1px rgba(255,255,255,.9)"></div><svg class="abs" style="left:1409.1px;top:453.45px" width="8" height="5" viewBox="0 0 8 5"><path d="M0.2 0.4H7.8L4 4.6Z" fill="#000"/></svg>
<div class="abs" style="left:1297px;top:468.5px;width:124.5px;height:20px;border:1px solid #3c3c3c;border-radius:2px;background:linear-gradient(to bottom,#f2f2f2 0,#ebebeb 48%,#dddddd 52%,#cfcfcf 100%);box-shadow:inset 0 0 0 1px rgba(255,255,255,.9)"></div><svg class="abs" style="left:1409.1px;top:476.7px" width="8" height="5" viewBox="0 0 8 5"><path d="M0.2 0.4H7.8L4 4.6Z" fill="#000"/></svg>
<span class="abs" style="left:1300.60px;top:425.00px;font-family:'Liberation Sans','DejaVu Sans',sans-serif;font-size:11px;line-height:14px;color:#000;letter-spacing:-0.160px;white-space:pre;">Auto</span>
<span class="abs" style="left:1300.60px;top:449.00px;font-family:'Liberation Sans','DejaVu Sans',sans-serif;font-size:11px;line-height:14px;color:#000;letter-spacing:-0.672px;white-space:pre;">CH1</span>
<span class="abs" style="left:1300.60px;top:472.50px;font-family:'Liberation Sans','DejaVu Sans',sans-serif;font-size:11px;line-height:14px;color:#000;letter-spacing:-0.474px;white-space:pre;">Rise Edge</span>
<div class="abs" style="left:1292px;top:502px;width:83.5px;height:18.5px;background:#fff;border:1px solid #abadb3;border-top-color:#8d98b0;border-left-color:#a5b3c9"></div>
<span class="abs" style="left:1330.00px;top:504.50px;font-family:'Liberation Sans','DejaVu Sans',sans-serif;font-size:11px;line-height:14px;color:#7f7f7f;letter-spacing:-0.181px;white-space:pre;">000 000</span>
<div class="abs" style="left:1377.3px;top:501.3px;width:44.2px;height:20.2px;border:1px solid #707070;border-radius:2px;background:linear-gradient(to bottom,#f2f2f2 0,#ebebeb 48%,#dddddd 52%,#cfcfcf 100%);box-shadow:inset 0 0 0 1px rgba(255,255,255,.9)"></div><svg class="abs" style="left:1409.1px;top:509.6px" width="8" height="5" viewBox="0 0 8 5"><path d="M0.2 0.4H7.8L4 4.6Z" fill="#000"/></svg>
<span class="abs" style="left:1380.50px;top:505.00px;font-family:'Liberation Sans','DejaVu Sans',sans-serif;font-size:11px;line-height:14px;color:#000;letter-spacing:-1.000px;white-space:pre;">mV</span>
<div class="abs" style="left:1349px;top:546.5px;width:48px;height:14px;background:#fff;border:1px solid #abadb3;border-top-color:#8d98b0;border-left-color:#a5b3c9"></div>
<span class="abs" style="left:1375.00px;top:547.00px;font-family:'Liberation Sans','DejaVu Sans',sans-serif;font-size:11px;line-height:14px;color:#000;letter-spacing:-0.299px;white-space:pre;">0.4</span>
<span class="abs" style="left:1403.50px;top:543.50px;font-family:'Liberation Sans','DejaVu Sans',sans-serif;font-size:11px;line-height:14px;color:#000;letter-spacing:-0.188px;white-space:pre;">div</span>
<div class="abs" style="left:1361.2px;top:588.2px;width:47.6px;height:14.4px;background:#fff;border:1px solid #abadb3;border-top-color:#8d98b0;border-left-color:#a5b3c9"></div>
<span class="abs" style="left:1389.50px;top:588.50px;font-family:'Liberation Sans','DejaVu Sans',sans-serif;font-size:11px;line-height:14px;color:#000;letter-spacing:-0.225px;white-space:pre;">50</span>
<span class="abs" style="left:1410.80px;top:586.00px;font-family:'Liberation Sans','DejaVu Sans',sans-serif;font-size:11px;line-height:14px;color:#000;white-space:pre;">%</span>
<div class="abs" style="left:1287.5px;top:620.5px;width:72px;height:20px;border:1px solid #adb2b5;border-radius:3px;background:#f4f4f4;box-shadow:inset 0 0 0 1px rgba(255,255,255,.95)"></div>
<span class="abs" style="left:1310.00px;top:624.00px;font-family:'Liberation Sans','DejaVu Sans',sans-serif;font-size:11px;line-height:14px;color:#838383;letter-spacing:-0.365px;white-space:pre;">Force</span>
<div class="abs" style="left:8px;top:729px;width:1209px;height:4px;background:linear-gradient(to bottom,#fff 0,#fff 1px,#e6e6e6 1px,#e6e6e6 3px,#fff 3px)"></div><div class="abs" style="left:1217px;top:731.500px;width:216px;height:2px;background:#fff"></div>
<div class="abs" style="left:8px;top:733px;width:1424px;height:19px;background:linear-gradient(to bottom,#5a7fb2 0,#5a7fb2 1px,#fff 1px,#fff 2px,#d7e6fa 2px,#c5dbf7 8px,#b2d0f5 8px,#cfe0f8 18px,#deebfd 18px,#deebfd 19px)"></div>
<span class="abs" style="left:12.50px;top:737.00px;font-family:'Liberation Sans','DejaVu Sans',sans-serif;font-size:11px;line-height:14px;color:#15428b;letter-spacing:-0.259px;white-space:pre;">Ready</span>
<div class="abs" style="left:964px;top:736px;width:1px;height:15px;background:#8aa9d6"></div><div class="abs" style="left:965px;top:736px;width:1px;height:15px;background:#f2f7fd"></div>
<span class="abs" style="left:966.50px;top:737.00px;font-family:'Liberation Sans','DejaVu Sans',sans-serif;font-size:11px;line-height:14px;color:#15428b;letter-spacing:-0.146px;white-space:pre;">ISDS205A(1.1)(6)Connected</span>
<div class="abs" style="left:1414px;top:736px;width:1px;height:15px;background:#8aa9d6"></div><div class="abs" style="left:1415px;top:736px;width:1px;height:15px;background:#f2f7fd"></div>
<svg class="abs" style="left:1421px;top:740px" width="11" height="12" viewBox="0 0 11 12" shape-rendering="crispEdges"><rect x="8" y="1" width="2" height="2" fill="#2f4166"/><rect x="10" y="3" width="1" height="1" fill="#e8f0fb"/><rect x="8" y="5" width="2" height="2" fill="#2f4166"/><rect x="10" y="7" width="1" height="1" fill="#e8f0fb"/><rect x="4" y="5" width="2" height="2" fill="#2f4166"/><rect x="6" y="7" width="1" height="1" fill="#e8f0fb"/><rect x="8" y="9" width="2" height="2" fill="#2f4166"/><rect x="10" y="11" width="1" height="1" fill="#e8f0fb"/><rect x="4" y="9" width="2" height="2" fill="#2f4166"/><rect x="6" y="11" width="1" height="1" fill="#e8f0fb"/><rect x="0" y="9" width="2" height="2" fill="#2f4166"/><rect x="2" y="11" width="1" height="1" fill="#e8f0fb"/></svg>
<div class="abs" style="left:7px;top:752px;width:1426px;height:1px;background:#3f4a57"></div>
<div class="abs" style="left:1432px;top:29px;width:1px;height:724px;background:#4d5b6b"></div>
</div>
<div id="winborder"></div>
</body></html>
